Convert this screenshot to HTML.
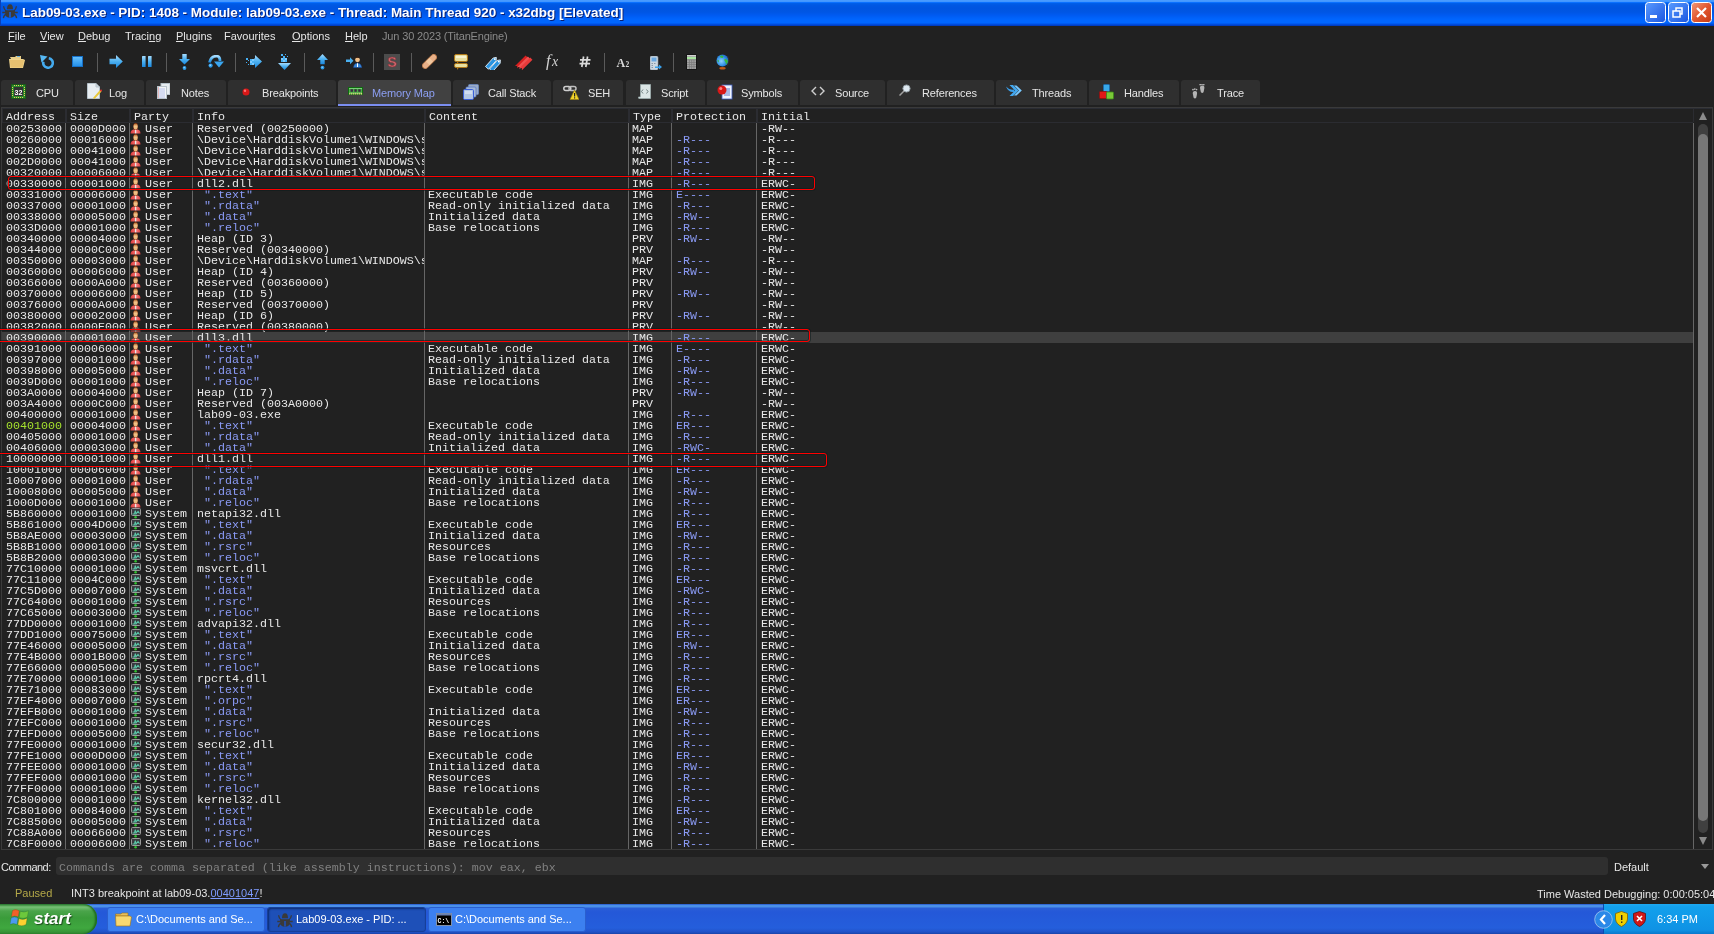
<!DOCTYPE html><html><head><meta charset="utf-8"><style>
*{margin:0;padding:0;box-sizing:border-box}
html,body{width:1714px;height:934px;overflow:hidden;background:#212121}
body{position:relative;font-family:"Liberation Sans",sans-serif;font-size:11px;color:#e6e6e6;will-change:transform}
.a{position:absolute}
.t{position:absolute;white-space:pre;line-height:13px}
.m{font-family:"Liberation Mono",monospace;font-size:11.667px}
#rows{position:absolute;left:0;top:0;will-change:transform;color:#e8e8e8}
#rows .t{line-height:13px;height:13px}
.sep{position:absolute;background:#666;width:1px}
.tsep{position:absolute;width:1px;top:53px;height:19px;background:#5a5a5a}
.tab{position:absolute;top:80px;height:25px;background:#2f2f2f;border-radius:3px 3px 0 0}
.tab.sel{background:#414141;height:26px}
.tab .lb{position:absolute;top:7px;white-space:pre;color:#e6e6e6;letter-spacing:-0.15px}
.tab.sel .lb{color:#8c9ff2}
.blue{color:#8b9bf6}
.green{color:#a6e22e}
u{text-decoration:underline;text-underline-offset:1px;text-decoration-thickness:1px}
</style></head><body>
<div class="a" style="left:0;top:0;width:1714px;height:26px;background:linear-gradient(#4a9cff 0px,#3f94ff 2px,#0a70ff 2px,#0a70ff 3px,#0060ea 3px,#0058e4 5px,#0054e0 8px,#0056e4 12px,#005af0 15px,#0062fa 18px,#0066ff 20px,#0066ff 23px,#0050e2 24px,#0046d4 25px,#0034b0 26px)"></div>
<div class="a" style="left:0;top:0;width:1px;height:26px;background:#0a3fb8"></div>
<svg class="a" style="left:0px;top:2px;" width="20" height="18" viewBox="0 0 20 18"><g fill="#3a3a3a"><path d="M7 7.3Q7 2.2 10 2.2Q13 2.2 13 7.3Z"/><path d="M5 8.3H15L14.6 12.8Q14 15.8 10 15.8Q6 15.8 5.4 12.8Z"/></g><path d="M3.6 4.3Q4 7.8 6.2 9M16.4 4.3Q16 7.8 13.8 9M2.3 10.5H17.7M6 12.3Q3.8 13 3.4 16.2M14 12.3Q16.2 13 16.6 16.2" stroke="#3a3a3a" stroke-width="1.3" fill="none"/><rect x="9.2" y="10" width="1.6" height="5.6" fill="#1a5fd8"/></svg>
<div class="t" style="left:22px;top:5px;font-size:13.45px;font-weight:bold;color:#fff;line-height:16px;text-shadow:1px 1px 0 #0a1f70">Lab09-03.exe - PID: 1408 - Module: lab09-03.exe - Thread: Main Thread 920 - x32dbg [Elevated]</div>
<svg class="a" style="left:1645px;top:2px;" width="21" height="21" viewBox="0 0 21 21"><defs><linearGradient id="tb" x1="0" y1="0" x2="1" y2="1"><stop offset="0" stop-color="#5a9bff"/><stop offset="1" stop-color="#1a55e0"/></linearGradient></defs><rect x="0.5" y="0.5" width="20" height="20" rx="3" fill="url(#tb)" stroke="#fff"/><rect x="5" y="13" width="7" height="3" fill="#fff"/></svg><svg class="a" style="left:1668px;top:2px;" width="21" height="21" viewBox="0 0 21 21"><rect x="0.5" y="0.5" width="20" height="20" rx="3" fill="url(#tb)" stroke="#fff"/><rect x="5" y="9" width="7" height="6" fill="none" stroke="#fff" stroke-width="1.5"/><path d="M8 9V6H14V12H12" fill="none" stroke="#fff" stroke-width="1.5"/></svg><svg class="a" style="left:1691px;top:2px;" width="21" height="21" viewBox="0 0 21 21"><defs><linearGradient id="tc" x1="0" y1="0" x2="1" y2="1"><stop offset="0" stop-color="#f29a7a"/><stop offset="0.5" stop-color="#e2572f"/><stop offset="1" stop-color="#c53a14"/></linearGradient></defs><rect x="0.5" y="0.5" width="20" height="20" rx="3" fill="url(#tc)" stroke="#fff"/><path d="M6 6L15 15M15 6L6 15" stroke="#fff" stroke-width="2.2"/></svg>
<div class="t" style="left:8px;top:30px"><u>F</u>ile</div>
<div class="t" style="left:40px;top:30px"><u>V</u>iew</div>
<div class="t" style="left:78px;top:30px"><u>D</u>ebug</div>
<div class="t" style="left:125px;top:30px">Traci<u>n</u>g</div>
<div class="t" style="left:176px;top:30px"><u>P</u>lugins</div>
<div class="t" style="left:224px;top:30px">Favour<u>i</u>tes</div>
<div class="t" style="left:292px;top:30px"><u>O</u>ptions</div>
<div class="t" style="left:345px;top:30px"><u>H</u>elp</div>
<div class="t" style="left:382px;top:30px;color:#8a8a8a;letter-spacing:-0.15px">Jun 30 2023 (TitanEngine)</div>
<div class="tsep" style="left:97px"></div>
<div class="tsep" style="left:166px"></div>
<div class="tsep" style="left:235px"></div>
<div class="tsep" style="left:304px"></div>
<div class="tsep" style="left:373px"></div>
<div class="tsep" style="left:411px"></div>
<div class="tsep" style="left:604px"></div>
<div class="tsep" style="left:673px"></div>
<svg class="a" style="left:9px;top:55px;" width="16" height="13" viewBox="0 0 16 13"><path d="M1 2H6L7 1H12V4H2Z" fill="#e8cf8a"/><rect x="8" y="1" width="3" height="1" fill="#6ab0e0"/><path d="M0 4H14L16 5L14 13H1Z" fill="#f0d48c"/><path d="M1 5H15L13.5 12.5H1.5Z" fill="#e6c070"/></svg><svg class="a" style="left:40px;top:55px;" width="14" height="14" viewBox="0 0 14 14"><path d="M8.8 3.2A4.8 4.8 0 1 1 3.4 6.6" fill="none" stroke="#44aaee" stroke-width="2.6"/><path d="M0 0L7.5 1.5L1.5 7.5Z" fill="#56b8f4"/></svg><svg class="a" style="left:72px;top:56px;" width="11" height="11" viewBox="0 0 11 11"><defs><linearGradient id="st" x1="0" y1="0" x2="0" y2="1"><stop offset="0" stop-color="#6cc4ff"/><stop offset="1" stop-color="#1e8ce8"/></linearGradient></defs><rect width="11" height="11" fill="url(#st)"/><rect x="0.5" y="0.5" width="10" height="10" fill="none" stroke="#1670c8"/></svg><svg class="a" style="left:109px;top:55px;" width="14" height="13" viewBox="0 0 14 13"><defs><linearGradient id="bg1" x1="0" y1="0" x2="0" y2="1"><stop offset="0" stop-color="#a6dcff"/><stop offset="0.5" stop-color="#4cb0f0"/><stop offset="1" stop-color="#1a88e0"/></linearGradient></defs><path d="M0.5 3.8H7V0L13.8 6.5L7 13V9.2H0.5Z" fill="url(#bg1)" /></svg><svg class="a" style="left:142px;top:56px;" width="10" height="11" viewBox="0 0 10 11"><rect x="0" y="0" width="3.6" height="11" rx="0.5" fill="url(#bg1)"/><rect x="6" y="0" width="3.6" height="11" rx="0.5" fill="url(#bg1)"/></svg><svg class="a" style="left:179px;top:54px;" width="11" height="16" viewBox="0 0 11 16"><path d="M3.3 0H7.7V5H11L5.5 10.5L0 5H3.3Z" fill="url(#bg1)" /><circle cx="5.5" cy="14" r="1.9" fill="#2a9ae8"/><circle cx="5.2" cy="13.6" r="0.8" fill="#8ad0ff"/></svg><svg class="a" style="left:208px;top:55px;" width="16" height="13" viewBox="0 0 16 13"><path d="M1.5 7.5Q3 1 9 1.2Q12 1.5 12 6" fill="none" stroke="url(#bg1)" stroke-width="2.8"/><path d="M6 6.5H16L11 12.5Z" fill="#3aa6f0"/><circle cx="2.6" cy="10.6" r="2.1" fill="#2a9ae8"/><circle cx="2.3" cy="10.2" r="0.9" fill="#8ad0ff"/></svg><svg class="a" style="left:246px;top:55px;" width="16" height="13" viewBox="0 0 16 13"><path d="M9 0L16 6.5L9 13V9.5H8V3.5H9Z" fill="url(#bg1)"/><g fill="#46b0f4"><rect x="0" y="3" width="2" height="2"/><rect x="4" y="4" width="2" height="2"/><rect x="6" y="4" width="2" height="2" fill="#7ccaff"/><rect x="4" y="6" width="2" height="2" fill="#7ccaff"/><rect x="6" y="6" width="2" height="2"/><rect x="4" y="8" width="2" height="2"/><rect x="6" y="8" width="2" height="2" fill="#7ccaff"/><rect x="0" y="7" width="1" height="1"/><rect x="2" y="9" width="1" height="1"/><rect x="2" y="5" width="1" height="1"/></g></svg><svg class="a" style="left:278px;top:54px;" width="13" height="16" viewBox="0 0 13 16"><path d="M0 9H13L6.5 16Z" fill="url(#bg1)"/><g fill="#46b0f4"><rect x="3" y="0" width="2" height="2"/><rect x="7" y="0" width="1" height="1"/><rect x="9" y="2" width="1" height="1"/><rect x="5" y="2" width="2" height="2"/><rect x="3" y="4" width="2" height="2" fill="#7ccaff"/><rect x="5" y="4" width="2" height="2"/><rect x="7" y="4" width="2" height="2" fill="#7ccaff"/><rect x="3" y="6" width="2" height="2"/><rect x="5" y="6" width="2" height="2" fill="#7ccaff"/><rect x="7" y="6" width="2" height="2"/></g></svg><svg class="a" style="left:317px;top:54px;" width="11" height="16" viewBox="0 0 11 16"><path d="M5.5 0L11 6H7.7V10.2H3.3V6H0Z" fill="url(#bg1)" /><circle cx="5.5" cy="13.6" r="1.9" fill="#2a9ae8"/><circle cx="5.2" cy="13.2" r="0.8" fill="#8ad0ff"/></svg><svg class="a" style="left:346px;top:56px;" width="16" height="12" viewBox="0 0 16 12"><path d="M0 3.5H4V1.3L7.5 4.8L4 8.3V6.1H0Z" fill="#4ab0f0"/><circle cx="11.5" cy="3.8" r="2.4" fill="#f0c08a"/><path d="M9 3Q9.5 0.3 11.5 0.5Q13.8 0.3 14 3L13.3 2Q11.5 1.3 9.7 2Z" fill="#3a2010"/><path d="M7.5 11.5Q8 7.2 11.5 7.2Q15 7.2 15.8 11.5Z" fill="#3a88d8" stroke="#1a4aa0" stroke-width="0.5"/><path d="M11 7.2H12V11H11Z" fill="#fff"/></svg><svg class="a" style="left:384px;top:54px;" width="16" height="16" viewBox="0 0 16 16"><rect width="16" height="16" fill="#4c4c4c"/><text x="8.2" y="13.3" text-anchor="middle" font-family="Liberation Sans" font-weight="bold" font-size="14" fill="#d0686e" stroke="#8a3038" stroke-width="0.5">S</text></svg><svg class="a" style="left:422px;top:54px;" width="15" height="15" viewBox="0 0 15 15"><g transform="rotate(-45 7.5 7.5)"><rect x="-1.5" y="4.5" width="18" height="6" rx="3" fill="#e8b088" stroke="#b07040" stroke-width="0.8"/><rect x="5" y="5" width="5" height="5" fill="#f0c8a0"/></g></svg><svg class="a" style="left:454px;top:54px;" width="14" height="16" viewBox="0 0 14 16"><rect x="0.5" y="0.5" width="13" height="7" rx="1.5" fill="#e8e0a0" stroke="#b07818"/><path d="M3 7.5L3 10L5 7.5Z" fill="#b07818"/><rect x="0.5" y="9.5" width="13" height="4" rx="1.5" fill="#e8e0a0" stroke="#b07818"/><path d="M3 13.5L3 16L5 13.5Z" fill="#b07818"/><rect x="2" y="2" width="10" height="2" fill="#f6f2d0"/></svg><svg class="a" style="left:484px;top:54px;" width="18" height="16" viewBox="0 0 18 16"><g transform="translate(1.5,12.5) rotate(-48)"><path d="M0 0H11.5L14 2L11.5 4H0Z" fill="#2a94e0" stroke="#f0f8ff" stroke-width="0.8"/><circle cx="11.7" cy="2" r="0.9" fill="#fff"/></g><g transform="translate(5.5,15) rotate(-48)"><path d="M0 0H11.5L14 2L11.5 4H0Z" fill="#2a94e0" stroke="#f0f8ff" stroke-width="0.8"/><circle cx="11.7" cy="2" r="0.9" fill="#fff"/></g></svg><svg class="a" style="left:514px;top:53px;" width="19" height="17" viewBox="0 0 19 17"><g transform="translate(1,13) rotate(-45)"><path d="M0 0H15V3.2H0L1.6 1.6Z" fill="#d82020"/></g><g transform="translate(3.3,14) rotate(-45)"><path d="M0 0H15V3.2H0L1.6 1.6Z" fill="#f05050"/></g><g transform="translate(5.6,15) rotate(-45)"><path d="M0 0H15V3.2H0L1.6 1.6Z" fill="#e83a3a"/></g></svg><svg class="a" style="left:545px;top:53px;" width="17" height="17" viewBox="0 0 17 17"><text x="1" y="13" font-family="Liberation Serif" font-style="italic" font-size="16.5" fill="#d2d2d2">f</text><text x="7" y="13" font-family="Liberation Serif" font-style="italic" font-size="14" fill="#d2d2d2">x</text></svg><svg class="a" style="left:579px;top:56px;" width="12" height="12" viewBox="0 0 12 12"><path d="M4.6 0.5L2.8 11M8.6 0.5L6.8 11M1 3.8H11.5M0.5 7.6H11" stroke="#dadada" stroke-width="1.7" fill="none"/></svg><svg class="a" style="left:616px;top:56px;" width="16" height="12" viewBox="0 0 16 12"><text x="0.5" y="10.5" font-family="Liberation Serif" font-weight="bold" font-size="12" fill="#d8d8d8">A</text><text x="9.5" y="10.5" font-family="Liberation Serif" font-weight="bold" font-size="7.5" fill="#d8d8d8">2</text></svg><svg class="a" style="left:650px;top:56px;" width="13" height="14" viewBox="0 0 13 14"><rect x="0" y="0" width="8" height="14" rx="1.5" fill="#cdd8e0" stroke="#8898a8" stroke-width="0.6"/><rect x="1.5" y="1.5" width="5" height="4" fill="#6aa8e0"/><g fill="#8898a8"><rect x="1.5" y="7" width="1.5" height="1"/><rect x="4" y="7" width="1.5" height="1"/><rect x="1.5" y="9" width="1.5" height="1"/><rect x="1.5" y="11" width="1.5" height="1"/></g><path d="M5 10.5H9V8.5L12 11L9 13.5V12H5Z" fill="#3aa0ea"/></svg><svg class="a" style="left:686px;top:54px;" width="11" height="16" viewBox="0 0 11 16"><rect x="0" y="0" width="11" height="16" rx="1" fill="#141414"/><rect x="1" y="1" width="9" height="14" fill="#a0a0a0"/><rect x="1" y="1" width="9" height="1.2" fill="#d0d0d0"/><rect x="1" y="3" width="9" height="2.2" fill="#a8e4a0"/><g fill="#7a7a7a"><rect x="3.2" y="6" width="0.7" height="9"/><rect x="5.4" y="6" width="0.7" height="9"/><rect x="7.6" y="6" width="0.7" height="9"/><rect x="1" y="8" width="9" height="0.7"/><rect x="1" y="10.2" width="9" height="0.7"/><rect x="1" y="12.4" width="9" height="0.7"/><rect x="1" y="5.5" width="9" height="0.7"/></g></svg><svg class="a" style="left:716px;top:54px;" width="14" height="16" viewBox="0 0 14 16"><defs><radialGradient id="gl" cx="0.4" cy="0.55" r="0.7"><stop offset="0" stop-color="#8ad0ff"/><stop offset="0.6" stop-color="#2a8ae0"/><stop offset="1" stop-color="#1a50b0"/></radialGradient></defs><circle cx="6.5" cy="6.5" r="6" fill="url(#gl)"/><path d="M4 2Q6 1 7.5 2.5L6.5 4L4.5 3.5Z M8.5 5Q11 4.5 12 7Q11.5 9.5 10 10.5L9.5 8Q8 7.5 8.5 5Z M1.5 6Q2.5 5.5 3 7L2 8.5Z" fill="#38b838"/><path d="M12 2.5Q14 6.5 11.5 11.5" stroke="#333" stroke-width="0.8" fill="none"/><ellipse cx="6.5" cy="14.3" rx="3.2" ry="1.2" fill="#c05a18"/></svg>
<div class="tab" style="left:1px;width:72px">
<div class="lb" style="left:35px">CPU</div>
<svg class="a" style="left:10px;top:4px" width="15" height="15" viewBox="0 0 15 15"><rect width="15" height="15" fill="#2a8a2a"/><rect x="0.5" y="0.5" width="14" height="14" fill="none" stroke="#1a5a1a"/><g fill="#e8d060"><rect x="3" y="1" width="1" height="1"/><rect x="5" y="1" width="1" height="1"/><rect x="7" y="1" width="1" height="1"/><rect x="9" y="1" width="1" height="1"/><rect x="11" y="1" width="1" height="1"/><rect x="3" y="13" width="1" height="1"/><rect x="5" y="13" width="1" height="1"/><rect x="7" y="13" width="1" height="1"/><rect x="9" y="13" width="1" height="1"/><rect x="11" y="13" width="1" height="1"/><rect x="1" y="3" width="1" height="1"/><rect x="1" y="5" width="1" height="1"/><rect x="1" y="7" width="1" height="1"/><rect x="1" y="9" width="1" height="1"/><rect x="1" y="11" width="1" height="1"/><rect x="13" y="3" width="1" height="1"/><rect x="13" y="5" width="1" height="1"/><rect x="13" y="7" width="1" height="1"/><rect x="13" y="9" width="1" height="1"/><rect x="13" y="11" width="1" height="1"/></g><rect x="3" y="3" width="9" height="9" fill="#333"/><text x="7.5" y="10.5" text-anchor="middle" font-family="Liberation Sans" font-weight="bold" font-size="7" fill="#fff">32</text></svg>
</div>
<div class="tab" style="left:75px;width:69px">
<div class="lb" style="left:34px">Log</div>
<svg class="a" style="left:12px;top:3px" width="15" height="16" viewBox="0 0 15 16"><path d="M0.5 0.5H9L12.5 4V15.5H0.5Z" fill="#e8eef2" stroke="#b8c4cc"/><path d="M9 0.5V4H12.5" fill="#c8d4dc" stroke="#b8c4cc"/><path d="M6 15L13 7L14.5 8.5L7.5 16Z" fill="#e8c838"/><circle cx="14" cy="7.5" r="1" fill="#e03030"/></svg>
</div>
<div class="tab" style="left:146px;width:80px">
<div class="lb" style="left:35px">Notes</div>
<svg class="a" style="left:11px;top:3px" width="13" height="16" viewBox="0 0 13 16"><rect x="4" y="0.5" width="9" height="11" fill="#e8eef2" stroke="#b8c4cc"/><rect x="0.5" y="3.5" width="9" height="12" fill="#f4f6f8" stroke="#b8c4cc"/><g stroke="#a8b8e8" stroke-width="0.8"><path d="M2 6H8M2 8H8M2 10H8M2 12H8M2 14H8"/></g><path d="M1.5 4V15" stroke="#e0a0a0" stroke-width="0.7"/></svg>
</div>
<div class="tab" style="left:228px;width:108px">
<div class="lb" style="left:34px">Breakpoints</div>
<svg class="a" style="left:14px;top:8px" width="8" height="8" viewBox="0 0 8 8"><circle cx="4" cy="4" r="3.5" fill="#d81818"/><circle cx="3" cy="2.8" r="1.2" fill="#ff7070"/></svg>
</div>
<div class="tab sel" style="left:338px;width:113px">
<div class="lb" style="left:34px">Memory Map</div>
<svg class="a" style="left:10px;top:7px" width="15" height="8" viewBox="0 0 15 8"><rect x="0" y="0" width="15" height="8" fill="#106a10"/><rect x="1" y="1" width="13" height="6" fill="#48b048"/><rect x="1" y="1" width="13" height="1" fill="#78d078"/><g fill="#3a2c3e"><rect x="2.5" y="2.2" width="2.5" height="2.6"/><rect x="6.3" y="2.2" width="2.5" height="2.6"/><rect x="10.2" y="2.2" width="2.5" height="2.6"/></g><g fill="#e8d088"><rect x="1.2" y="5.8" width="1.1" height="1.8"/><rect x="3.2" y="5.8" width="1.1" height="1.8"/><rect x="5.2" y="5.8" width="1.1" height="1.8"/><rect x="7.2" y="5.8" width="1.1" height="1.8"/><rect x="9.2" y="5.8" width="1.1" height="1.8"/><rect x="11.2" y="5.8" width="1.1" height="1.8"/><rect x="13.0" y="5.8" width="1.1" height="1.8"/></g></svg>
<div class="a" style="left:0;bottom:0;width:100%;height:2px;background:#7b8ef0"></div>
</div>
<div class="tab" style="left:453px;width:98px">
<div class="lb" style="left:35px">Call Stack</div>
<svg class="a" style="left:10px;top:4px" width="16" height="16" viewBox="0 0 16 16"><rect x="5.5" y="0.5" width="10" height="10" rx="1" fill="#9aacc8" stroke="#6a88c0" stroke-width="0.8"/><rect x="3" y="3" width="10" height="10" rx="1" fill="#a8bcd8" stroke="#5a7ac8" stroke-width="0.8"/><rect x="0.5" y="5.5" width="10" height="10" rx="1.2" fill="#b4c8e4" stroke="#3a60d8" stroke-width="1"/><rect x="2" y="7" width="7" height="3" fill="#d0ddf0"/></svg>
</div>
<div class="tab" style="left:553px;width:70px">
<div class="lb" style="left:35px">SEH</div>
<svg class="a" style="left:10px;top:5px" width="16" height="15" viewBox="0 0 16 15"><rect x="0.8" y="1.5" width="7" height="4" rx="2" fill="none" stroke="#d0d0d0" stroke-width="1.5"/><rect x="6" y="1.5" width="7" height="4" rx="2" fill="none" stroke="#c0c0c0" stroke-width="1.5"/><path d="M11.5 5L16 14.5H7Z" fill="#f2d42a" stroke="#a08010" stroke-width="0.6"/><rect x="11" y="8" width="1.2" height="3.5" fill="#222"/><rect x="11" y="12.3" width="1.2" height="1.2" fill="#222"/></svg>
</div>
<div class="tab" style="left:626px;width:79px">
<div class="lb" style="left:35px">Script</div>
<svg class="a" style="left:12px;top:4px" width="13" height="15" viewBox="0 0 13 15"><path d="M2.5 0.5H12.5V14.5H1Q0.5 14.5 0.5 13.5V13H2.5Z" fill="#dce6e6" stroke="#a0b0b0" stroke-width="0.8"/><path d="M5 5.5L3.5 7.5L5 9.5M8.5 5.5L10 7.5L8.5 9.5" fill="none" stroke="#708080" stroke-width="1"/></svg>
</div>
<div class="tab" style="left:707px;width:91px">
<div class="lb" style="left:34px">Symbols</div>
<svg class="a" style="left:10px;top:4px" width="16" height="16" viewBox="0 0 16 16"><rect x="5" y="1" width="10" height="14" fill="#f0f4ff" stroke="#4060c0" stroke-width="0.8"/><g stroke="#4060c0" stroke-width="0.8"><path d="M7 5H13M7 7H13M7 9H13M7 11H13"/></g><circle cx="5" cy="6" r="4.5" fill="#d81818"/><circle cx="3.8" cy="4.6" r="1.5" fill="#ff8080"/></svg>
</div>
<div class="tab" style="left:800px;width:85px">
<div class="lb" style="left:35px">Source</div>
<svg class="a" style="left:11px;top:6px" width="14" height="10" viewBox="0 0 14 10"><path d="M5 1L1 5L5 9M9 1L13 5L9 9" fill="none" stroke="#cfcfcf" stroke-width="1.4"/></svg>
</div>
<div class="tab" style="left:887px;width:107px">
<div class="lb" style="left:35px">References</div>
<svg class="a" style="left:12px;top:4px" width="12" height="12" viewBox="0 0 12 12"><circle cx="7.5" cy="4.5" r="3.6" fill="#dde8f0" stroke="#909aa0"/><path d="M5 7L0.5 11.5" stroke="#a0a0a0" stroke-width="1.5"/></svg>
</div>
<div class="tab" style="left:996px;width:91px">
<div class="lb" style="left:36px">Threads</div>
<svg class="a" style="left:10px;top:5px" width="16" height="11" viewBox="0 0 16 11"><path d="M0 1.5Q2.5 8 8.5 6.8L8 4.6Q3.5 5.5 0 1.5Z" fill="#3a9ee8"/><path d="M3.5 0L9 5.5L3.5 11H7L12.5 5.5L7 0Z" fill="#42a8f0"/><path d="M8 0.5L13 5.5L8 10.5H10.5L15.8 5.5L10.5 0.5Z" fill="#78c8ff"/></svg>
</div>
<div class="tab" style="left:1089px;width:90px">
<div class="lb" style="left:35px">Handles</div>
<svg class="a" style="left:10px;top:4px" width="15" height="16" viewBox="0 0 15 16"><rect x="4.5" y="0.5" width="6" height="7" rx="0.8" fill="#38a8e8" stroke="#1a6ab0" stroke-width="0.8"/><rect x="0.5" y="7.5" width="7.5" height="7" rx="0.8" fill="#e01818" stroke="#901010" stroke-width="0.8"/><rect x="7.5" y="8" width="7" height="7" rx="0.8" fill="#7ac838" stroke="#3a8818" stroke-width="0.8"/></svg>
</div>
<div class="tab" style="left:1181px;width:79px">
<div class="lb" style="left:36px">Trace</div>
<svg class="a" style="left:11px;top:4px" width="14" height="16" viewBox="0 0 14 16"><g fill="#b4b4b4"><path d="M0.8 9.5Q0.5 7 3 7Q5.5 7 5 10L4.3 13.5Q3 15.5 1.5 13.5Z"/><path d="M8 4Q7.8 1.5 10.3 1.5Q12.8 1.5 12.3 4.5L11.6 8Q10.3 10 8.8 8Z"/><circle cx="1" cy="5.6" r="0.9"/><circle cx="2.8" cy="5.1" r="0.9"/><circle cx="4.6" cy="5.6" r="0.8"/><circle cx="8.2" cy="0.6" r="0.9"/><circle cx="10" cy="0.3" r="0.9"/><circle cx="11.8" cy="0.7" r="0.8"/></g></svg>
</div>
<div class="a" style="left:1px;top:107px;width:1712px;height:743px;border:1px solid #3a3a3a;border-right-color:#3a3a3a"></div>
<div class="a" style="left:2px;top:122px;width:1691px;height:1px;background:#2b2c31"></div>
<div class="a" style="left:2px;top:108px;width:1710px;height:1px;background:#2a2c33"></div>
<div class="a" style="left:65px;top:108px;width:2px;height:14px;background:#2b2c31"></div>
<div class="a" style="left:129px;top:108px;width:2px;height:14px;background:#2b2c31"></div>
<div class="a" style="left:192px;top:108px;width:2px;height:14px;background:#2b2c31"></div>
<div class="a" style="left:424px;top:108px;width:2px;height:14px;background:#2b2c31"></div>
<div class="a" style="left:628px;top:108px;width:2px;height:14px;background:#2b2c31"></div>
<div class="a" style="left:671px;top:108px;width:2px;height:14px;background:#2b2c31"></div>
<div class="a" style="left:756px;top:108px;width:2px;height:14px;background:#2b2c31"></div>
<div class="a" style="left:2px;top:108px;width:1px;height:14px;background:#2b2c31"></div>
<div class="a" style="left:1693px;top:108px;width:1px;height:14px;background:#2b2c31"></div>
<div style="position:absolute;left:0;top:0;will-change:transform;color:#e8e8e8">
<div class="t m" style="left:6px;top:111px;line-height:13px">Address</div>
<div class="t m" style="left:70px;top:111px;line-height:13px">Size</div>
<div class="t m" style="left:134px;top:111px;line-height:13px">Party</div>
<div class="t m" style="left:197px;top:111px;line-height:13px">Info</div>
<div class="t m" style="left:429px;top:111px;line-height:13px">Content</div>
<div class="t m" style="left:633px;top:111px;line-height:13px">Type</div>
<div class="t m" style="left:676px;top:111px;line-height:13px">Protection</div>
<div class="t m" style="left:761px;top:111px;line-height:13px">Initial</div>
</div>
<div class="a" style="left:2px;top:332px;width:1691px;height:11px;background:#3f3f3f"></div>
<div class="sep" style="left:65px;top:123px;height:726px"></div>
<div class="sep" style="left:129px;top:123px;height:726px"></div>
<div class="sep" style="left:192px;top:123px;height:726px"></div>
<div class="sep" style="left:424px;top:123px;height:726px"></div>
<div class="sep" style="left:628px;top:123px;height:726px"></div>
<div class="sep" style="left:671px;top:123px;height:726px"></div>
<div class="sep" style="left:756px;top:123px;height:726px"></div>
<div class="sep" style="left:1693px;top:123px;height:726px"></div>
<div id="rows">
<div class="t m" style="left:6px;top:123px">00253000</div>
<div class="t m" style="left:70px;top:123px">0000D000</div>
<svg class="a" style="left:130px;top:123px" width="11" height="11" viewBox="0 0 11 11"><defs><linearGradient id="ub" x1="0" y1="0" x2="1" y2="0"><stop offset="0" stop-color="#d83838"/><stop offset="0.6" stop-color="#f87a7a"/><stop offset="1" stop-color="#d84040"/></linearGradient><linearGradient id="uh" x1="0" y1="0" x2="0" y2="1"><stop offset="0" stop-color="#a8581c"/><stop offset="0.45" stop-color="#f2c48a"/><stop offset="1" stop-color="#e8b070"/></linearGradient></defs><path d="M3.3 2.2Q3.5 0 5.6 0Q7.7 0 7.8 2.2L7.6 6.5Q5.6 7.5 3.5 6.5Z" fill="#7a2a10"/><ellipse cx="5.6" cy="3.4" rx="2.1" ry="3" fill="url(#uh)"/><path d="M0.5 10.5Q0.6 7.2 3.5 6.5L5.6 7L7.6 6.5Q10.5 7.2 10.5 10.5Z" fill="url(#ub)"/><rect x="5" y="6.8" width="1.2" height="3.5" fill="#e8e8e8"/></svg>
<div class="t m" style="left:145px;top:123px">User</div>
<div class="t m" style="left:197px;top:123px;width:227px;overflow:hidden">Reserved (00250000)</div>
<div class="t m" style="left:632px;top:123px">MAP</div>
<div class="t m" style="left:761px;top:123px">-RW--</div>
<div class="t m" style="left:6px;top:134px">00260000</div>
<div class="t m" style="left:70px;top:134px">00016000</div>
<svg class="a" style="left:130px;top:134px" width="11" height="11" viewBox="0 0 11 11"><defs><linearGradient id="ub" x1="0" y1="0" x2="1" y2="0"><stop offset="0" stop-color="#d83838"/><stop offset="0.6" stop-color="#f87a7a"/><stop offset="1" stop-color="#d84040"/></linearGradient><linearGradient id="uh" x1="0" y1="0" x2="0" y2="1"><stop offset="0" stop-color="#a8581c"/><stop offset="0.45" stop-color="#f2c48a"/><stop offset="1" stop-color="#e8b070"/></linearGradient></defs><path d="M3.3 2.2Q3.5 0 5.6 0Q7.7 0 7.8 2.2L7.6 6.5Q5.6 7.5 3.5 6.5Z" fill="#7a2a10"/><ellipse cx="5.6" cy="3.4" rx="2.1" ry="3" fill="url(#uh)"/><path d="M0.5 10.5Q0.6 7.2 3.5 6.5L5.6 7L7.6 6.5Q10.5 7.2 10.5 10.5Z" fill="url(#ub)"/><rect x="5" y="6.8" width="1.2" height="3.5" fill="#e8e8e8"/></svg>
<div class="t m" style="left:145px;top:134px">User</div>
<div class="t m" style="left:197px;top:134px;width:227px;overflow:hidden">\Device\HarddiskVolume1\WINDOWS\system32</div>
<div class="t m" style="left:632px;top:134px">MAP</div>
<div class="t m blue" style="left:676px;top:134px">-R---</div>
<div class="t m" style="left:761px;top:134px">-R---</div>
<div class="t m" style="left:6px;top:145px">00280000</div>
<div class="t m" style="left:70px;top:145px">00041000</div>
<svg class="a" style="left:130px;top:145px" width="11" height="11" viewBox="0 0 11 11"><defs><linearGradient id="ub" x1="0" y1="0" x2="1" y2="0"><stop offset="0" stop-color="#d83838"/><stop offset="0.6" stop-color="#f87a7a"/><stop offset="1" stop-color="#d84040"/></linearGradient><linearGradient id="uh" x1="0" y1="0" x2="0" y2="1"><stop offset="0" stop-color="#a8581c"/><stop offset="0.45" stop-color="#f2c48a"/><stop offset="1" stop-color="#e8b070"/></linearGradient></defs><path d="M3.3 2.2Q3.5 0 5.6 0Q7.7 0 7.8 2.2L7.6 6.5Q5.6 7.5 3.5 6.5Z" fill="#7a2a10"/><ellipse cx="5.6" cy="3.4" rx="2.1" ry="3" fill="url(#uh)"/><path d="M0.5 10.5Q0.6 7.2 3.5 6.5L5.6 7L7.6 6.5Q10.5 7.2 10.5 10.5Z" fill="url(#ub)"/><rect x="5" y="6.8" width="1.2" height="3.5" fill="#e8e8e8"/></svg>
<div class="t m" style="left:145px;top:145px">User</div>
<div class="t m" style="left:197px;top:145px;width:227px;overflow:hidden">\Device\HarddiskVolume1\WINDOWS\system32</div>
<div class="t m" style="left:632px;top:145px">MAP</div>
<div class="t m blue" style="left:676px;top:145px">-R---</div>
<div class="t m" style="left:761px;top:145px">-R---</div>
<div class="t m" style="left:6px;top:156px">002D0000</div>
<div class="t m" style="left:70px;top:156px">00041000</div>
<svg class="a" style="left:130px;top:156px" width="11" height="11" viewBox="0 0 11 11"><defs><linearGradient id="ub" x1="0" y1="0" x2="1" y2="0"><stop offset="0" stop-color="#d83838"/><stop offset="0.6" stop-color="#f87a7a"/><stop offset="1" stop-color="#d84040"/></linearGradient><linearGradient id="uh" x1="0" y1="0" x2="0" y2="1"><stop offset="0" stop-color="#a8581c"/><stop offset="0.45" stop-color="#f2c48a"/><stop offset="1" stop-color="#e8b070"/></linearGradient></defs><path d="M3.3 2.2Q3.5 0 5.6 0Q7.7 0 7.8 2.2L7.6 6.5Q5.6 7.5 3.5 6.5Z" fill="#7a2a10"/><ellipse cx="5.6" cy="3.4" rx="2.1" ry="3" fill="url(#uh)"/><path d="M0.5 10.5Q0.6 7.2 3.5 6.5L5.6 7L7.6 6.5Q10.5 7.2 10.5 10.5Z" fill="url(#ub)"/><rect x="5" y="6.8" width="1.2" height="3.5" fill="#e8e8e8"/></svg>
<div class="t m" style="left:145px;top:156px">User</div>
<div class="t m" style="left:197px;top:156px;width:227px;overflow:hidden">\Device\HarddiskVolume1\WINDOWS\system32</div>
<div class="t m" style="left:632px;top:156px">MAP</div>
<div class="t m blue" style="left:676px;top:156px">-R---</div>
<div class="t m" style="left:761px;top:156px">-R---</div>
<div class="t m" style="left:6px;top:167px">00320000</div>
<div class="t m" style="left:70px;top:167px">00006000</div>
<svg class="a" style="left:130px;top:167px" width="11" height="11" viewBox="0 0 11 11"><defs><linearGradient id="ub" x1="0" y1="0" x2="1" y2="0"><stop offset="0" stop-color="#d83838"/><stop offset="0.6" stop-color="#f87a7a"/><stop offset="1" stop-color="#d84040"/></linearGradient><linearGradient id="uh" x1="0" y1="0" x2="0" y2="1"><stop offset="0" stop-color="#a8581c"/><stop offset="0.45" stop-color="#f2c48a"/><stop offset="1" stop-color="#e8b070"/></linearGradient></defs><path d="M3.3 2.2Q3.5 0 5.6 0Q7.7 0 7.8 2.2L7.6 6.5Q5.6 7.5 3.5 6.5Z" fill="#7a2a10"/><ellipse cx="5.6" cy="3.4" rx="2.1" ry="3" fill="url(#uh)"/><path d="M0.5 10.5Q0.6 7.2 3.5 6.5L5.6 7L7.6 6.5Q10.5 7.2 10.5 10.5Z" fill="url(#ub)"/><rect x="5" y="6.8" width="1.2" height="3.5" fill="#e8e8e8"/></svg>
<div class="t m" style="left:145px;top:167px">User</div>
<div class="t m" style="left:197px;top:167px;width:227px;overflow:hidden">\Device\HarddiskVolume1\WINDOWS\system32</div>
<div class="t m" style="left:632px;top:167px">MAP</div>
<div class="t m blue" style="left:676px;top:167px">-R---</div>
<div class="t m" style="left:761px;top:167px">-R---</div>
<div class="t m" style="left:6px;top:178px">00330000</div>
<div class="t m" style="left:70px;top:178px">00001000</div>
<svg class="a" style="left:130px;top:178px" width="11" height="11" viewBox="0 0 11 11"><defs><linearGradient id="ub" x1="0" y1="0" x2="1" y2="0"><stop offset="0" stop-color="#d83838"/><stop offset="0.6" stop-color="#f87a7a"/><stop offset="1" stop-color="#d84040"/></linearGradient><linearGradient id="uh" x1="0" y1="0" x2="0" y2="1"><stop offset="0" stop-color="#a8581c"/><stop offset="0.45" stop-color="#f2c48a"/><stop offset="1" stop-color="#e8b070"/></linearGradient></defs><path d="M3.3 2.2Q3.5 0 5.6 0Q7.7 0 7.8 2.2L7.6 6.5Q5.6 7.5 3.5 6.5Z" fill="#7a2a10"/><ellipse cx="5.6" cy="3.4" rx="2.1" ry="3" fill="url(#uh)"/><path d="M0.5 10.5Q0.6 7.2 3.5 6.5L5.6 7L7.6 6.5Q10.5 7.2 10.5 10.5Z" fill="url(#ub)"/><rect x="5" y="6.8" width="1.2" height="3.5" fill="#e8e8e8"/></svg>
<div class="t m" style="left:145px;top:178px">User</div>
<div class="t m" style="left:197px;top:178px;width:227px;overflow:hidden">dll2.dll</div>
<div class="t m" style="left:632px;top:178px">IMG</div>
<div class="t m blue" style="left:676px;top:178px">-R---</div>
<div class="t m" style="left:761px;top:178px">ERWC-</div>
<div class="t m" style="left:6px;top:189px">00331000</div>
<div class="t m" style="left:70px;top:189px">00006000</div>
<svg class="a" style="left:130px;top:189px" width="11" height="11" viewBox="0 0 11 11"><defs><linearGradient id="ub" x1="0" y1="0" x2="1" y2="0"><stop offset="0" stop-color="#d83838"/><stop offset="0.6" stop-color="#f87a7a"/><stop offset="1" stop-color="#d84040"/></linearGradient><linearGradient id="uh" x1="0" y1="0" x2="0" y2="1"><stop offset="0" stop-color="#a8581c"/><stop offset="0.45" stop-color="#f2c48a"/><stop offset="1" stop-color="#e8b070"/></linearGradient></defs><path d="M3.3 2.2Q3.5 0 5.6 0Q7.7 0 7.8 2.2L7.6 6.5Q5.6 7.5 3.5 6.5Z" fill="#7a2a10"/><ellipse cx="5.6" cy="3.4" rx="2.1" ry="3" fill="url(#uh)"/><path d="M0.5 10.5Q0.6 7.2 3.5 6.5L5.6 7L7.6 6.5Q10.5 7.2 10.5 10.5Z" fill="url(#ub)"/><rect x="5" y="6.8" width="1.2" height="3.5" fill="#e8e8e8"/></svg>
<div class="t m" style="left:145px;top:189px">User</div>
<div class="t m blue" style="left:197px;top:189px"> &quot;.text&quot;</div>
<div class="t m" style="left:428px;top:189px">Executable code</div>
<div class="t m" style="left:632px;top:189px">IMG</div>
<div class="t m blue" style="left:676px;top:189px">E----</div>
<div class="t m" style="left:761px;top:189px">ERWC-</div>
<div class="t m" style="left:6px;top:200px">00337000</div>
<div class="t m" style="left:70px;top:200px">00001000</div>
<svg class="a" style="left:130px;top:200px" width="11" height="11" viewBox="0 0 11 11"><defs><linearGradient id="ub" x1="0" y1="0" x2="1" y2="0"><stop offset="0" stop-color="#d83838"/><stop offset="0.6" stop-color="#f87a7a"/><stop offset="1" stop-color="#d84040"/></linearGradient><linearGradient id="uh" x1="0" y1="0" x2="0" y2="1"><stop offset="0" stop-color="#a8581c"/><stop offset="0.45" stop-color="#f2c48a"/><stop offset="1" stop-color="#e8b070"/></linearGradient></defs><path d="M3.3 2.2Q3.5 0 5.6 0Q7.7 0 7.8 2.2L7.6 6.5Q5.6 7.5 3.5 6.5Z" fill="#7a2a10"/><ellipse cx="5.6" cy="3.4" rx="2.1" ry="3" fill="url(#uh)"/><path d="M0.5 10.5Q0.6 7.2 3.5 6.5L5.6 7L7.6 6.5Q10.5 7.2 10.5 10.5Z" fill="url(#ub)"/><rect x="5" y="6.8" width="1.2" height="3.5" fill="#e8e8e8"/></svg>
<div class="t m" style="left:145px;top:200px">User</div>
<div class="t m blue" style="left:197px;top:200px"> &quot;.rdata&quot;</div>
<div class="t m" style="left:428px;top:200px">Read-only initialized data</div>
<div class="t m" style="left:632px;top:200px">IMG</div>
<div class="t m blue" style="left:676px;top:200px">-R---</div>
<div class="t m" style="left:761px;top:200px">ERWC-</div>
<div class="t m" style="left:6px;top:211px">00338000</div>
<div class="t m" style="left:70px;top:211px">00005000</div>
<svg class="a" style="left:130px;top:211px" width="11" height="11" viewBox="0 0 11 11"><defs><linearGradient id="ub" x1="0" y1="0" x2="1" y2="0"><stop offset="0" stop-color="#d83838"/><stop offset="0.6" stop-color="#f87a7a"/><stop offset="1" stop-color="#d84040"/></linearGradient><linearGradient id="uh" x1="0" y1="0" x2="0" y2="1"><stop offset="0" stop-color="#a8581c"/><stop offset="0.45" stop-color="#f2c48a"/><stop offset="1" stop-color="#e8b070"/></linearGradient></defs><path d="M3.3 2.2Q3.5 0 5.6 0Q7.7 0 7.8 2.2L7.6 6.5Q5.6 7.5 3.5 6.5Z" fill="#7a2a10"/><ellipse cx="5.6" cy="3.4" rx="2.1" ry="3" fill="url(#uh)"/><path d="M0.5 10.5Q0.6 7.2 3.5 6.5L5.6 7L7.6 6.5Q10.5 7.2 10.5 10.5Z" fill="url(#ub)"/><rect x="5" y="6.8" width="1.2" height="3.5" fill="#e8e8e8"/></svg>
<div class="t m" style="left:145px;top:211px">User</div>
<div class="t m blue" style="left:197px;top:211px"> &quot;.data&quot;</div>
<div class="t m" style="left:428px;top:211px">Initialized data</div>
<div class="t m" style="left:632px;top:211px">IMG</div>
<div class="t m blue" style="left:676px;top:211px">-RW--</div>
<div class="t m" style="left:761px;top:211px">ERWC-</div>
<div class="t m" style="left:6px;top:222px">0033D000</div>
<div class="t m" style="left:70px;top:222px">00001000</div>
<svg class="a" style="left:130px;top:222px" width="11" height="11" viewBox="0 0 11 11"><defs><linearGradient id="ub" x1="0" y1="0" x2="1" y2="0"><stop offset="0" stop-color="#d83838"/><stop offset="0.6" stop-color="#f87a7a"/><stop offset="1" stop-color="#d84040"/></linearGradient><linearGradient id="uh" x1="0" y1="0" x2="0" y2="1"><stop offset="0" stop-color="#a8581c"/><stop offset="0.45" stop-color="#f2c48a"/><stop offset="1" stop-color="#e8b070"/></linearGradient></defs><path d="M3.3 2.2Q3.5 0 5.6 0Q7.7 0 7.8 2.2L7.6 6.5Q5.6 7.5 3.5 6.5Z" fill="#7a2a10"/><ellipse cx="5.6" cy="3.4" rx="2.1" ry="3" fill="url(#uh)"/><path d="M0.5 10.5Q0.6 7.2 3.5 6.5L5.6 7L7.6 6.5Q10.5 7.2 10.5 10.5Z" fill="url(#ub)"/><rect x="5" y="6.8" width="1.2" height="3.5" fill="#e8e8e8"/></svg>
<div class="t m" style="left:145px;top:222px">User</div>
<div class="t m blue" style="left:197px;top:222px"> &quot;.reloc&quot;</div>
<div class="t m" style="left:428px;top:222px">Base relocations</div>
<div class="t m" style="left:632px;top:222px">IMG</div>
<div class="t m blue" style="left:676px;top:222px">-R---</div>
<div class="t m" style="left:761px;top:222px">ERWC-</div>
<div class="t m" style="left:6px;top:233px">00340000</div>
<div class="t m" style="left:70px;top:233px">00004000</div>
<svg class="a" style="left:130px;top:233px" width="11" height="11" viewBox="0 0 11 11"><defs><linearGradient id="ub" x1="0" y1="0" x2="1" y2="0"><stop offset="0" stop-color="#d83838"/><stop offset="0.6" stop-color="#f87a7a"/><stop offset="1" stop-color="#d84040"/></linearGradient><linearGradient id="uh" x1="0" y1="0" x2="0" y2="1"><stop offset="0" stop-color="#a8581c"/><stop offset="0.45" stop-color="#f2c48a"/><stop offset="1" stop-color="#e8b070"/></linearGradient></defs><path d="M3.3 2.2Q3.5 0 5.6 0Q7.7 0 7.8 2.2L7.6 6.5Q5.6 7.5 3.5 6.5Z" fill="#7a2a10"/><ellipse cx="5.6" cy="3.4" rx="2.1" ry="3" fill="url(#uh)"/><path d="M0.5 10.5Q0.6 7.2 3.5 6.5L5.6 7L7.6 6.5Q10.5 7.2 10.5 10.5Z" fill="url(#ub)"/><rect x="5" y="6.8" width="1.2" height="3.5" fill="#e8e8e8"/></svg>
<div class="t m" style="left:145px;top:233px">User</div>
<div class="t m" style="left:197px;top:233px;width:227px;overflow:hidden">Heap (ID 3)</div>
<div class="t m" style="left:632px;top:233px">PRV</div>
<div class="t m blue" style="left:676px;top:233px">-RW--</div>
<div class="t m" style="left:761px;top:233px">-RW--</div>
<div class="t m" style="left:6px;top:244px">00344000</div>
<div class="t m" style="left:70px;top:244px">0000C000</div>
<svg class="a" style="left:130px;top:244px" width="11" height="11" viewBox="0 0 11 11"><defs><linearGradient id="ub" x1="0" y1="0" x2="1" y2="0"><stop offset="0" stop-color="#d83838"/><stop offset="0.6" stop-color="#f87a7a"/><stop offset="1" stop-color="#d84040"/></linearGradient><linearGradient id="uh" x1="0" y1="0" x2="0" y2="1"><stop offset="0" stop-color="#a8581c"/><stop offset="0.45" stop-color="#f2c48a"/><stop offset="1" stop-color="#e8b070"/></linearGradient></defs><path d="M3.3 2.2Q3.5 0 5.6 0Q7.7 0 7.8 2.2L7.6 6.5Q5.6 7.5 3.5 6.5Z" fill="#7a2a10"/><ellipse cx="5.6" cy="3.4" rx="2.1" ry="3" fill="url(#uh)"/><path d="M0.5 10.5Q0.6 7.2 3.5 6.5L5.6 7L7.6 6.5Q10.5 7.2 10.5 10.5Z" fill="url(#ub)"/><rect x="5" y="6.8" width="1.2" height="3.5" fill="#e8e8e8"/></svg>
<div class="t m" style="left:145px;top:244px">User</div>
<div class="t m" style="left:197px;top:244px;width:227px;overflow:hidden">Reserved (00340000)</div>
<div class="t m" style="left:632px;top:244px">PRV</div>
<div class="t m" style="left:761px;top:244px">-RW--</div>
<div class="t m" style="left:6px;top:255px">00350000</div>
<div class="t m" style="left:70px;top:255px">00003000</div>
<svg class="a" style="left:130px;top:255px" width="11" height="11" viewBox="0 0 11 11"><defs><linearGradient id="ub" x1="0" y1="0" x2="1" y2="0"><stop offset="0" stop-color="#d83838"/><stop offset="0.6" stop-color="#f87a7a"/><stop offset="1" stop-color="#d84040"/></linearGradient><linearGradient id="uh" x1="0" y1="0" x2="0" y2="1"><stop offset="0" stop-color="#a8581c"/><stop offset="0.45" stop-color="#f2c48a"/><stop offset="1" stop-color="#e8b070"/></linearGradient></defs><path d="M3.3 2.2Q3.5 0 5.6 0Q7.7 0 7.8 2.2L7.6 6.5Q5.6 7.5 3.5 6.5Z" fill="#7a2a10"/><ellipse cx="5.6" cy="3.4" rx="2.1" ry="3" fill="url(#uh)"/><path d="M0.5 10.5Q0.6 7.2 3.5 6.5L5.6 7L7.6 6.5Q10.5 7.2 10.5 10.5Z" fill="url(#ub)"/><rect x="5" y="6.8" width="1.2" height="3.5" fill="#e8e8e8"/></svg>
<div class="t m" style="left:145px;top:255px">User</div>
<div class="t m" style="left:197px;top:255px;width:227px;overflow:hidden">\Device\HarddiskVolume1\WINDOWS\system32</div>
<div class="t m" style="left:632px;top:255px">MAP</div>
<div class="t m blue" style="left:676px;top:255px">-R---</div>
<div class="t m" style="left:761px;top:255px">-R---</div>
<div class="t m" style="left:6px;top:266px">00360000</div>
<div class="t m" style="left:70px;top:266px">00006000</div>
<svg class="a" style="left:130px;top:266px" width="11" height="11" viewBox="0 0 11 11"><defs><linearGradient id="ub" x1="0" y1="0" x2="1" y2="0"><stop offset="0" stop-color="#d83838"/><stop offset="0.6" stop-color="#f87a7a"/><stop offset="1" stop-color="#d84040"/></linearGradient><linearGradient id="uh" x1="0" y1="0" x2="0" y2="1"><stop offset="0" stop-color="#a8581c"/><stop offset="0.45" stop-color="#f2c48a"/><stop offset="1" stop-color="#e8b070"/></linearGradient></defs><path d="M3.3 2.2Q3.5 0 5.6 0Q7.7 0 7.8 2.2L7.6 6.5Q5.6 7.5 3.5 6.5Z" fill="#7a2a10"/><ellipse cx="5.6" cy="3.4" rx="2.1" ry="3" fill="url(#uh)"/><path d="M0.5 10.5Q0.6 7.2 3.5 6.5L5.6 7L7.6 6.5Q10.5 7.2 10.5 10.5Z" fill="url(#ub)"/><rect x="5" y="6.8" width="1.2" height="3.5" fill="#e8e8e8"/></svg>
<div class="t m" style="left:145px;top:266px">User</div>
<div class="t m" style="left:197px;top:266px;width:227px;overflow:hidden">Heap (ID 4)</div>
<div class="t m" style="left:632px;top:266px">PRV</div>
<div class="t m blue" style="left:676px;top:266px">-RW--</div>
<div class="t m" style="left:761px;top:266px">-RW--</div>
<div class="t m" style="left:6px;top:277px">00366000</div>
<div class="t m" style="left:70px;top:277px">0000A000</div>
<svg class="a" style="left:130px;top:277px" width="11" height="11" viewBox="0 0 11 11"><defs><linearGradient id="ub" x1="0" y1="0" x2="1" y2="0"><stop offset="0" stop-color="#d83838"/><stop offset="0.6" stop-color="#f87a7a"/><stop offset="1" stop-color="#d84040"/></linearGradient><linearGradient id="uh" x1="0" y1="0" x2="0" y2="1"><stop offset="0" stop-color="#a8581c"/><stop offset="0.45" stop-color="#f2c48a"/><stop offset="1" stop-color="#e8b070"/></linearGradient></defs><path d="M3.3 2.2Q3.5 0 5.6 0Q7.7 0 7.8 2.2L7.6 6.5Q5.6 7.5 3.5 6.5Z" fill="#7a2a10"/><ellipse cx="5.6" cy="3.4" rx="2.1" ry="3" fill="url(#uh)"/><path d="M0.5 10.5Q0.6 7.2 3.5 6.5L5.6 7L7.6 6.5Q10.5 7.2 10.5 10.5Z" fill="url(#ub)"/><rect x="5" y="6.8" width="1.2" height="3.5" fill="#e8e8e8"/></svg>
<div class="t m" style="left:145px;top:277px">User</div>
<div class="t m" style="left:197px;top:277px;width:227px;overflow:hidden">Reserved (00360000)</div>
<div class="t m" style="left:632px;top:277px">PRV</div>
<div class="t m" style="left:761px;top:277px">-RW--</div>
<div class="t m" style="left:6px;top:288px">00370000</div>
<div class="t m" style="left:70px;top:288px">00006000</div>
<svg class="a" style="left:130px;top:288px" width="11" height="11" viewBox="0 0 11 11"><defs><linearGradient id="ub" x1="0" y1="0" x2="1" y2="0"><stop offset="0" stop-color="#d83838"/><stop offset="0.6" stop-color="#f87a7a"/><stop offset="1" stop-color="#d84040"/></linearGradient><linearGradient id="uh" x1="0" y1="0" x2="0" y2="1"><stop offset="0" stop-color="#a8581c"/><stop offset="0.45" stop-color="#f2c48a"/><stop offset="1" stop-color="#e8b070"/></linearGradient></defs><path d="M3.3 2.2Q3.5 0 5.6 0Q7.7 0 7.8 2.2L7.6 6.5Q5.6 7.5 3.5 6.5Z" fill="#7a2a10"/><ellipse cx="5.6" cy="3.4" rx="2.1" ry="3" fill="url(#uh)"/><path d="M0.5 10.5Q0.6 7.2 3.5 6.5L5.6 7L7.6 6.5Q10.5 7.2 10.5 10.5Z" fill="url(#ub)"/><rect x="5" y="6.8" width="1.2" height="3.5" fill="#e8e8e8"/></svg>
<div class="t m" style="left:145px;top:288px">User</div>
<div class="t m" style="left:197px;top:288px;width:227px;overflow:hidden">Heap (ID 5)</div>
<div class="t m" style="left:632px;top:288px">PRV</div>
<div class="t m blue" style="left:676px;top:288px">-RW--</div>
<div class="t m" style="left:761px;top:288px">-RW--</div>
<div class="t m" style="left:6px;top:299px">00376000</div>
<div class="t m" style="left:70px;top:299px">0000A000</div>
<svg class="a" style="left:130px;top:299px" width="11" height="11" viewBox="0 0 11 11"><defs><linearGradient id="ub" x1="0" y1="0" x2="1" y2="0"><stop offset="0" stop-color="#d83838"/><stop offset="0.6" stop-color="#f87a7a"/><stop offset="1" stop-color="#d84040"/></linearGradient><linearGradient id="uh" x1="0" y1="0" x2="0" y2="1"><stop offset="0" stop-color="#a8581c"/><stop offset="0.45" stop-color="#f2c48a"/><stop offset="1" stop-color="#e8b070"/></linearGradient></defs><path d="M3.3 2.2Q3.5 0 5.6 0Q7.7 0 7.8 2.2L7.6 6.5Q5.6 7.5 3.5 6.5Z" fill="#7a2a10"/><ellipse cx="5.6" cy="3.4" rx="2.1" ry="3" fill="url(#uh)"/><path d="M0.5 10.5Q0.6 7.2 3.5 6.5L5.6 7L7.6 6.5Q10.5 7.2 10.5 10.5Z" fill="url(#ub)"/><rect x="5" y="6.8" width="1.2" height="3.5" fill="#e8e8e8"/></svg>
<div class="t m" style="left:145px;top:299px">User</div>
<div class="t m" style="left:197px;top:299px;width:227px;overflow:hidden">Reserved (00370000)</div>
<div class="t m" style="left:632px;top:299px">PRV</div>
<div class="t m" style="left:761px;top:299px">-RW--</div>
<div class="t m" style="left:6px;top:310px">00380000</div>
<div class="t m" style="left:70px;top:310px">00002000</div>
<svg class="a" style="left:130px;top:310px" width="11" height="11" viewBox="0 0 11 11"><defs><linearGradient id="ub" x1="0" y1="0" x2="1" y2="0"><stop offset="0" stop-color="#d83838"/><stop offset="0.6" stop-color="#f87a7a"/><stop offset="1" stop-color="#d84040"/></linearGradient><linearGradient id="uh" x1="0" y1="0" x2="0" y2="1"><stop offset="0" stop-color="#a8581c"/><stop offset="0.45" stop-color="#f2c48a"/><stop offset="1" stop-color="#e8b070"/></linearGradient></defs><path d="M3.3 2.2Q3.5 0 5.6 0Q7.7 0 7.8 2.2L7.6 6.5Q5.6 7.5 3.5 6.5Z" fill="#7a2a10"/><ellipse cx="5.6" cy="3.4" rx="2.1" ry="3" fill="url(#uh)"/><path d="M0.5 10.5Q0.6 7.2 3.5 6.5L5.6 7L7.6 6.5Q10.5 7.2 10.5 10.5Z" fill="url(#ub)"/><rect x="5" y="6.8" width="1.2" height="3.5" fill="#e8e8e8"/></svg>
<div class="t m" style="left:145px;top:310px">User</div>
<div class="t m" style="left:197px;top:310px;width:227px;overflow:hidden">Heap (ID 6)</div>
<div class="t m" style="left:632px;top:310px">PRV</div>
<div class="t m blue" style="left:676px;top:310px">-RW--</div>
<div class="t m" style="left:761px;top:310px">-RW--</div>
<div class="t m" style="left:6px;top:321px">00382000</div>
<div class="t m" style="left:70px;top:321px">0000E000</div>
<svg class="a" style="left:130px;top:321px" width="11" height="11" viewBox="0 0 11 11"><defs><linearGradient id="ub" x1="0" y1="0" x2="1" y2="0"><stop offset="0" stop-color="#d83838"/><stop offset="0.6" stop-color="#f87a7a"/><stop offset="1" stop-color="#d84040"/></linearGradient><linearGradient id="uh" x1="0" y1="0" x2="0" y2="1"><stop offset="0" stop-color="#a8581c"/><stop offset="0.45" stop-color="#f2c48a"/><stop offset="1" stop-color="#e8b070"/></linearGradient></defs><path d="M3.3 2.2Q3.5 0 5.6 0Q7.7 0 7.8 2.2L7.6 6.5Q5.6 7.5 3.5 6.5Z" fill="#7a2a10"/><ellipse cx="5.6" cy="3.4" rx="2.1" ry="3" fill="url(#uh)"/><path d="M0.5 10.5Q0.6 7.2 3.5 6.5L5.6 7L7.6 6.5Q10.5 7.2 10.5 10.5Z" fill="url(#ub)"/><rect x="5" y="6.8" width="1.2" height="3.5" fill="#e8e8e8"/></svg>
<div class="t m" style="left:145px;top:321px">User</div>
<div class="t m" style="left:197px;top:321px;width:227px;overflow:hidden">Reserved (00380000)</div>
<div class="t m" style="left:632px;top:321px">PRV</div>
<div class="t m" style="left:761px;top:321px">-RW--</div>
<div class="t m" style="left:6px;top:332px">00390000</div>
<div class="t m" style="left:70px;top:332px">00001000</div>
<svg class="a" style="left:130px;top:332px" width="11" height="11" viewBox="0 0 11 11"><defs><linearGradient id="ub" x1="0" y1="0" x2="1" y2="0"><stop offset="0" stop-color="#d83838"/><stop offset="0.6" stop-color="#f87a7a"/><stop offset="1" stop-color="#d84040"/></linearGradient><linearGradient id="uh" x1="0" y1="0" x2="0" y2="1"><stop offset="0" stop-color="#a8581c"/><stop offset="0.45" stop-color="#f2c48a"/><stop offset="1" stop-color="#e8b070"/></linearGradient></defs><path d="M3.3 2.2Q3.5 0 5.6 0Q7.7 0 7.8 2.2L7.6 6.5Q5.6 7.5 3.5 6.5Z" fill="#7a2a10"/><ellipse cx="5.6" cy="3.4" rx="2.1" ry="3" fill="url(#uh)"/><path d="M0.5 10.5Q0.6 7.2 3.5 6.5L5.6 7L7.6 6.5Q10.5 7.2 10.5 10.5Z" fill="url(#ub)"/><rect x="5" y="6.8" width="1.2" height="3.5" fill="#e8e8e8"/></svg>
<div class="t m" style="left:145px;top:332px">User</div>
<div class="t m" style="left:197px;top:332px;width:227px;overflow:hidden">dll3.dll</div>
<div class="t m" style="left:632px;top:332px">IMG</div>
<div class="t m blue" style="left:676px;top:332px">-R---</div>
<div class="t m" style="left:761px;top:332px">ERWC-</div>
<div class="t m" style="left:6px;top:343px">00391000</div>
<div class="t m" style="left:70px;top:343px">00006000</div>
<svg class="a" style="left:130px;top:343px" width="11" height="11" viewBox="0 0 11 11"><defs><linearGradient id="ub" x1="0" y1="0" x2="1" y2="0"><stop offset="0" stop-color="#d83838"/><stop offset="0.6" stop-color="#f87a7a"/><stop offset="1" stop-color="#d84040"/></linearGradient><linearGradient id="uh" x1="0" y1="0" x2="0" y2="1"><stop offset="0" stop-color="#a8581c"/><stop offset="0.45" stop-color="#f2c48a"/><stop offset="1" stop-color="#e8b070"/></linearGradient></defs><path d="M3.3 2.2Q3.5 0 5.6 0Q7.7 0 7.8 2.2L7.6 6.5Q5.6 7.5 3.5 6.5Z" fill="#7a2a10"/><ellipse cx="5.6" cy="3.4" rx="2.1" ry="3" fill="url(#uh)"/><path d="M0.5 10.5Q0.6 7.2 3.5 6.5L5.6 7L7.6 6.5Q10.5 7.2 10.5 10.5Z" fill="url(#ub)"/><rect x="5" y="6.8" width="1.2" height="3.5" fill="#e8e8e8"/></svg>
<div class="t m" style="left:145px;top:343px">User</div>
<div class="t m blue" style="left:197px;top:343px"> &quot;.text&quot;</div>
<div class="t m" style="left:428px;top:343px">Executable code</div>
<div class="t m" style="left:632px;top:343px">IMG</div>
<div class="t m blue" style="left:676px;top:343px">E----</div>
<div class="t m" style="left:761px;top:343px">ERWC-</div>
<div class="t m" style="left:6px;top:354px">00397000</div>
<div class="t m" style="left:70px;top:354px">00001000</div>
<svg class="a" style="left:130px;top:354px" width="11" height="11" viewBox="0 0 11 11"><defs><linearGradient id="ub" x1="0" y1="0" x2="1" y2="0"><stop offset="0" stop-color="#d83838"/><stop offset="0.6" stop-color="#f87a7a"/><stop offset="1" stop-color="#d84040"/></linearGradient><linearGradient id="uh" x1="0" y1="0" x2="0" y2="1"><stop offset="0" stop-color="#a8581c"/><stop offset="0.45" stop-color="#f2c48a"/><stop offset="1" stop-color="#e8b070"/></linearGradient></defs><path d="M3.3 2.2Q3.5 0 5.6 0Q7.7 0 7.8 2.2L7.6 6.5Q5.6 7.5 3.5 6.5Z" fill="#7a2a10"/><ellipse cx="5.6" cy="3.4" rx="2.1" ry="3" fill="url(#uh)"/><path d="M0.5 10.5Q0.6 7.2 3.5 6.5L5.6 7L7.6 6.5Q10.5 7.2 10.5 10.5Z" fill="url(#ub)"/><rect x="5" y="6.8" width="1.2" height="3.5" fill="#e8e8e8"/></svg>
<div class="t m" style="left:145px;top:354px">User</div>
<div class="t m blue" style="left:197px;top:354px"> &quot;.rdata&quot;</div>
<div class="t m" style="left:428px;top:354px">Read-only initialized data</div>
<div class="t m" style="left:632px;top:354px">IMG</div>
<div class="t m blue" style="left:676px;top:354px">-R---</div>
<div class="t m" style="left:761px;top:354px">ERWC-</div>
<div class="t m" style="left:6px;top:365px">00398000</div>
<div class="t m" style="left:70px;top:365px">00005000</div>
<svg class="a" style="left:130px;top:365px" width="11" height="11" viewBox="0 0 11 11"><defs><linearGradient id="ub" x1="0" y1="0" x2="1" y2="0"><stop offset="0" stop-color="#d83838"/><stop offset="0.6" stop-color="#f87a7a"/><stop offset="1" stop-color="#d84040"/></linearGradient><linearGradient id="uh" x1="0" y1="0" x2="0" y2="1"><stop offset="0" stop-color="#a8581c"/><stop offset="0.45" stop-color="#f2c48a"/><stop offset="1" stop-color="#e8b070"/></linearGradient></defs><path d="M3.3 2.2Q3.5 0 5.6 0Q7.7 0 7.8 2.2L7.6 6.5Q5.6 7.5 3.5 6.5Z" fill="#7a2a10"/><ellipse cx="5.6" cy="3.4" rx="2.1" ry="3" fill="url(#uh)"/><path d="M0.5 10.5Q0.6 7.2 3.5 6.5L5.6 7L7.6 6.5Q10.5 7.2 10.5 10.5Z" fill="url(#ub)"/><rect x="5" y="6.8" width="1.2" height="3.5" fill="#e8e8e8"/></svg>
<div class="t m" style="left:145px;top:365px">User</div>
<div class="t m blue" style="left:197px;top:365px"> &quot;.data&quot;</div>
<div class="t m" style="left:428px;top:365px">Initialized data</div>
<div class="t m" style="left:632px;top:365px">IMG</div>
<div class="t m blue" style="left:676px;top:365px">-RW--</div>
<div class="t m" style="left:761px;top:365px">ERWC-</div>
<div class="t m" style="left:6px;top:376px">0039D000</div>
<div class="t m" style="left:70px;top:376px">00001000</div>
<svg class="a" style="left:130px;top:376px" width="11" height="11" viewBox="0 0 11 11"><defs><linearGradient id="ub" x1="0" y1="0" x2="1" y2="0"><stop offset="0" stop-color="#d83838"/><stop offset="0.6" stop-color="#f87a7a"/><stop offset="1" stop-color="#d84040"/></linearGradient><linearGradient id="uh" x1="0" y1="0" x2="0" y2="1"><stop offset="0" stop-color="#a8581c"/><stop offset="0.45" stop-color="#f2c48a"/><stop offset="1" stop-color="#e8b070"/></linearGradient></defs><path d="M3.3 2.2Q3.5 0 5.6 0Q7.7 0 7.8 2.2L7.6 6.5Q5.6 7.5 3.5 6.5Z" fill="#7a2a10"/><ellipse cx="5.6" cy="3.4" rx="2.1" ry="3" fill="url(#uh)"/><path d="M0.5 10.5Q0.6 7.2 3.5 6.5L5.6 7L7.6 6.5Q10.5 7.2 10.5 10.5Z" fill="url(#ub)"/><rect x="5" y="6.8" width="1.2" height="3.5" fill="#e8e8e8"/></svg>
<div class="t m" style="left:145px;top:376px">User</div>
<div class="t m blue" style="left:197px;top:376px"> &quot;.reloc&quot;</div>
<div class="t m" style="left:428px;top:376px">Base relocations</div>
<div class="t m" style="left:632px;top:376px">IMG</div>
<div class="t m blue" style="left:676px;top:376px">-R---</div>
<div class="t m" style="left:761px;top:376px">ERWC-</div>
<div class="t m" style="left:6px;top:387px">003A0000</div>
<div class="t m" style="left:70px;top:387px">00004000</div>
<svg class="a" style="left:130px;top:387px" width="11" height="11" viewBox="0 0 11 11"><defs><linearGradient id="ub" x1="0" y1="0" x2="1" y2="0"><stop offset="0" stop-color="#d83838"/><stop offset="0.6" stop-color="#f87a7a"/><stop offset="1" stop-color="#d84040"/></linearGradient><linearGradient id="uh" x1="0" y1="0" x2="0" y2="1"><stop offset="0" stop-color="#a8581c"/><stop offset="0.45" stop-color="#f2c48a"/><stop offset="1" stop-color="#e8b070"/></linearGradient></defs><path d="M3.3 2.2Q3.5 0 5.6 0Q7.7 0 7.8 2.2L7.6 6.5Q5.6 7.5 3.5 6.5Z" fill="#7a2a10"/><ellipse cx="5.6" cy="3.4" rx="2.1" ry="3" fill="url(#uh)"/><path d="M0.5 10.5Q0.6 7.2 3.5 6.5L5.6 7L7.6 6.5Q10.5 7.2 10.5 10.5Z" fill="url(#ub)"/><rect x="5" y="6.8" width="1.2" height="3.5" fill="#e8e8e8"/></svg>
<div class="t m" style="left:145px;top:387px">User</div>
<div class="t m" style="left:197px;top:387px;width:227px;overflow:hidden">Heap (ID 7)</div>
<div class="t m" style="left:632px;top:387px">PRV</div>
<div class="t m blue" style="left:676px;top:387px">-RW--</div>
<div class="t m" style="left:761px;top:387px">-RW--</div>
<div class="t m" style="left:6px;top:398px">003A4000</div>
<div class="t m" style="left:70px;top:398px">0000C000</div>
<svg class="a" style="left:130px;top:398px" width="11" height="11" viewBox="0 0 11 11"><defs><linearGradient id="ub" x1="0" y1="0" x2="1" y2="0"><stop offset="0" stop-color="#d83838"/><stop offset="0.6" stop-color="#f87a7a"/><stop offset="1" stop-color="#d84040"/></linearGradient><linearGradient id="uh" x1="0" y1="0" x2="0" y2="1"><stop offset="0" stop-color="#a8581c"/><stop offset="0.45" stop-color="#f2c48a"/><stop offset="1" stop-color="#e8b070"/></linearGradient></defs><path d="M3.3 2.2Q3.5 0 5.6 0Q7.7 0 7.8 2.2L7.6 6.5Q5.6 7.5 3.5 6.5Z" fill="#7a2a10"/><ellipse cx="5.6" cy="3.4" rx="2.1" ry="3" fill="url(#uh)"/><path d="M0.5 10.5Q0.6 7.2 3.5 6.5L5.6 7L7.6 6.5Q10.5 7.2 10.5 10.5Z" fill="url(#ub)"/><rect x="5" y="6.8" width="1.2" height="3.5" fill="#e8e8e8"/></svg>
<div class="t m" style="left:145px;top:398px">User</div>
<div class="t m" style="left:197px;top:398px;width:227px;overflow:hidden">Reserved (003A0000)</div>
<div class="t m" style="left:632px;top:398px">PRV</div>
<div class="t m" style="left:761px;top:398px">-RW--</div>
<div class="t m" style="left:6px;top:409px">00400000</div>
<div class="t m" style="left:70px;top:409px">00001000</div>
<svg class="a" style="left:130px;top:409px" width="11" height="11" viewBox="0 0 11 11"><defs><linearGradient id="ub" x1="0" y1="0" x2="1" y2="0"><stop offset="0" stop-color="#d83838"/><stop offset="0.6" stop-color="#f87a7a"/><stop offset="1" stop-color="#d84040"/></linearGradient><linearGradient id="uh" x1="0" y1="0" x2="0" y2="1"><stop offset="0" stop-color="#a8581c"/><stop offset="0.45" stop-color="#f2c48a"/><stop offset="1" stop-color="#e8b070"/></linearGradient></defs><path d="M3.3 2.2Q3.5 0 5.6 0Q7.7 0 7.8 2.2L7.6 6.5Q5.6 7.5 3.5 6.5Z" fill="#7a2a10"/><ellipse cx="5.6" cy="3.4" rx="2.1" ry="3" fill="url(#uh)"/><path d="M0.5 10.5Q0.6 7.2 3.5 6.5L5.6 7L7.6 6.5Q10.5 7.2 10.5 10.5Z" fill="url(#ub)"/><rect x="5" y="6.8" width="1.2" height="3.5" fill="#e8e8e8"/></svg>
<div class="t m" style="left:145px;top:409px">User</div>
<div class="t m" style="left:197px;top:409px;width:227px;overflow:hidden">lab09-03.exe</div>
<div class="t m" style="left:632px;top:409px">IMG</div>
<div class="t m blue" style="left:676px;top:409px">-R---</div>
<div class="t m" style="left:761px;top:409px">ERWC-</div>
<div class="t m green" style="left:6px;top:420px">00401000</div>
<div class="t m" style="left:70px;top:420px">00004000</div>
<svg class="a" style="left:130px;top:420px" width="11" height="11" viewBox="0 0 11 11"><defs><linearGradient id="ub" x1="0" y1="0" x2="1" y2="0"><stop offset="0" stop-color="#d83838"/><stop offset="0.6" stop-color="#f87a7a"/><stop offset="1" stop-color="#d84040"/></linearGradient><linearGradient id="uh" x1="0" y1="0" x2="0" y2="1"><stop offset="0" stop-color="#a8581c"/><stop offset="0.45" stop-color="#f2c48a"/><stop offset="1" stop-color="#e8b070"/></linearGradient></defs><path d="M3.3 2.2Q3.5 0 5.6 0Q7.7 0 7.8 2.2L7.6 6.5Q5.6 7.5 3.5 6.5Z" fill="#7a2a10"/><ellipse cx="5.6" cy="3.4" rx="2.1" ry="3" fill="url(#uh)"/><path d="M0.5 10.5Q0.6 7.2 3.5 6.5L5.6 7L7.6 6.5Q10.5 7.2 10.5 10.5Z" fill="url(#ub)"/><rect x="5" y="6.8" width="1.2" height="3.5" fill="#e8e8e8"/></svg>
<div class="t m" style="left:145px;top:420px">User</div>
<div class="t m blue" style="left:197px;top:420px"> &quot;.text&quot;</div>
<div class="t m" style="left:428px;top:420px">Executable code</div>
<div class="t m" style="left:632px;top:420px">IMG</div>
<div class="t m blue" style="left:676px;top:420px">ER---</div>
<div class="t m" style="left:761px;top:420px">ERWC-</div>
<div class="t m" style="left:6px;top:431px">00405000</div>
<div class="t m" style="left:70px;top:431px">00001000</div>
<svg class="a" style="left:130px;top:431px" width="11" height="11" viewBox="0 0 11 11"><defs><linearGradient id="ub" x1="0" y1="0" x2="1" y2="0"><stop offset="0" stop-color="#d83838"/><stop offset="0.6" stop-color="#f87a7a"/><stop offset="1" stop-color="#d84040"/></linearGradient><linearGradient id="uh" x1="0" y1="0" x2="0" y2="1"><stop offset="0" stop-color="#a8581c"/><stop offset="0.45" stop-color="#f2c48a"/><stop offset="1" stop-color="#e8b070"/></linearGradient></defs><path d="M3.3 2.2Q3.5 0 5.6 0Q7.7 0 7.8 2.2L7.6 6.5Q5.6 7.5 3.5 6.5Z" fill="#7a2a10"/><ellipse cx="5.6" cy="3.4" rx="2.1" ry="3" fill="url(#uh)"/><path d="M0.5 10.5Q0.6 7.2 3.5 6.5L5.6 7L7.6 6.5Q10.5 7.2 10.5 10.5Z" fill="url(#ub)"/><rect x="5" y="6.8" width="1.2" height="3.5" fill="#e8e8e8"/></svg>
<div class="t m" style="left:145px;top:431px">User</div>
<div class="t m blue" style="left:197px;top:431px"> &quot;.rdata&quot;</div>
<div class="t m" style="left:428px;top:431px">Read-only initialized data</div>
<div class="t m" style="left:632px;top:431px">IMG</div>
<div class="t m blue" style="left:676px;top:431px">-R---</div>
<div class="t m" style="left:761px;top:431px">ERWC-</div>
<div class="t m" style="left:6px;top:442px">00406000</div>
<div class="t m" style="left:70px;top:442px">00003000</div>
<svg class="a" style="left:130px;top:442px" width="11" height="11" viewBox="0 0 11 11"><defs><linearGradient id="ub" x1="0" y1="0" x2="1" y2="0"><stop offset="0" stop-color="#d83838"/><stop offset="0.6" stop-color="#f87a7a"/><stop offset="1" stop-color="#d84040"/></linearGradient><linearGradient id="uh" x1="0" y1="0" x2="0" y2="1"><stop offset="0" stop-color="#a8581c"/><stop offset="0.45" stop-color="#f2c48a"/><stop offset="1" stop-color="#e8b070"/></linearGradient></defs><path d="M3.3 2.2Q3.5 0 5.6 0Q7.7 0 7.8 2.2L7.6 6.5Q5.6 7.5 3.5 6.5Z" fill="#7a2a10"/><ellipse cx="5.6" cy="3.4" rx="2.1" ry="3" fill="url(#uh)"/><path d="M0.5 10.5Q0.6 7.2 3.5 6.5L5.6 7L7.6 6.5Q10.5 7.2 10.5 10.5Z" fill="url(#ub)"/><rect x="5" y="6.8" width="1.2" height="3.5" fill="#e8e8e8"/></svg>
<div class="t m" style="left:145px;top:442px">User</div>
<div class="t m blue" style="left:197px;top:442px"> &quot;.data&quot;</div>
<div class="t m" style="left:428px;top:442px">Initialized data</div>
<div class="t m" style="left:632px;top:442px">IMG</div>
<div class="t m blue" style="left:676px;top:442px">-RWC-</div>
<div class="t m" style="left:761px;top:442px">ERWC-</div>
<div class="t m" style="left:6px;top:453px">10000000</div>
<div class="t m" style="left:70px;top:453px">00001000</div>
<svg class="a" style="left:130px;top:453px" width="11" height="11" viewBox="0 0 11 11"><defs><linearGradient id="ub" x1="0" y1="0" x2="1" y2="0"><stop offset="0" stop-color="#d83838"/><stop offset="0.6" stop-color="#f87a7a"/><stop offset="1" stop-color="#d84040"/></linearGradient><linearGradient id="uh" x1="0" y1="0" x2="0" y2="1"><stop offset="0" stop-color="#a8581c"/><stop offset="0.45" stop-color="#f2c48a"/><stop offset="1" stop-color="#e8b070"/></linearGradient></defs><path d="M3.3 2.2Q3.5 0 5.6 0Q7.7 0 7.8 2.2L7.6 6.5Q5.6 7.5 3.5 6.5Z" fill="#7a2a10"/><ellipse cx="5.6" cy="3.4" rx="2.1" ry="3" fill="url(#uh)"/><path d="M0.5 10.5Q0.6 7.2 3.5 6.5L5.6 7L7.6 6.5Q10.5 7.2 10.5 10.5Z" fill="url(#ub)"/><rect x="5" y="6.8" width="1.2" height="3.5" fill="#e8e8e8"/></svg>
<div class="t m" style="left:145px;top:453px">User</div>
<div class="t m" style="left:197px;top:453px;width:227px;overflow:hidden">dll1.dll</div>
<div class="t m" style="left:632px;top:453px">IMG</div>
<div class="t m blue" style="left:676px;top:453px">-R---</div>
<div class="t m" style="left:761px;top:453px">ERWC-</div>
<div class="t m" style="left:6px;top:464px">10001000</div>
<div class="t m" style="left:70px;top:464px">00006000</div>
<svg class="a" style="left:130px;top:464px" width="11" height="11" viewBox="0 0 11 11"><defs><linearGradient id="ub" x1="0" y1="0" x2="1" y2="0"><stop offset="0" stop-color="#d83838"/><stop offset="0.6" stop-color="#f87a7a"/><stop offset="1" stop-color="#d84040"/></linearGradient><linearGradient id="uh" x1="0" y1="0" x2="0" y2="1"><stop offset="0" stop-color="#a8581c"/><stop offset="0.45" stop-color="#f2c48a"/><stop offset="1" stop-color="#e8b070"/></linearGradient></defs><path d="M3.3 2.2Q3.5 0 5.6 0Q7.7 0 7.8 2.2L7.6 6.5Q5.6 7.5 3.5 6.5Z" fill="#7a2a10"/><ellipse cx="5.6" cy="3.4" rx="2.1" ry="3" fill="url(#uh)"/><path d="M0.5 10.5Q0.6 7.2 3.5 6.5L5.6 7L7.6 6.5Q10.5 7.2 10.5 10.5Z" fill="url(#ub)"/><rect x="5" y="6.8" width="1.2" height="3.5" fill="#e8e8e8"/></svg>
<div class="t m" style="left:145px;top:464px">User</div>
<div class="t m blue" style="left:197px;top:464px"> &quot;.text&quot;</div>
<div class="t m" style="left:428px;top:464px">Executable code</div>
<div class="t m" style="left:632px;top:464px">IMG</div>
<div class="t m blue" style="left:676px;top:464px">ER---</div>
<div class="t m" style="left:761px;top:464px">ERWC-</div>
<div class="t m" style="left:6px;top:475px">10007000</div>
<div class="t m" style="left:70px;top:475px">00001000</div>
<svg class="a" style="left:130px;top:475px" width="11" height="11" viewBox="0 0 11 11"><defs><linearGradient id="ub" x1="0" y1="0" x2="1" y2="0"><stop offset="0" stop-color="#d83838"/><stop offset="0.6" stop-color="#f87a7a"/><stop offset="1" stop-color="#d84040"/></linearGradient><linearGradient id="uh" x1="0" y1="0" x2="0" y2="1"><stop offset="0" stop-color="#a8581c"/><stop offset="0.45" stop-color="#f2c48a"/><stop offset="1" stop-color="#e8b070"/></linearGradient></defs><path d="M3.3 2.2Q3.5 0 5.6 0Q7.7 0 7.8 2.2L7.6 6.5Q5.6 7.5 3.5 6.5Z" fill="#7a2a10"/><ellipse cx="5.6" cy="3.4" rx="2.1" ry="3" fill="url(#uh)"/><path d="M0.5 10.5Q0.6 7.2 3.5 6.5L5.6 7L7.6 6.5Q10.5 7.2 10.5 10.5Z" fill="url(#ub)"/><rect x="5" y="6.8" width="1.2" height="3.5" fill="#e8e8e8"/></svg>
<div class="t m" style="left:145px;top:475px">User</div>
<div class="t m blue" style="left:197px;top:475px"> &quot;.rdata&quot;</div>
<div class="t m" style="left:428px;top:475px">Read-only initialized data</div>
<div class="t m" style="left:632px;top:475px">IMG</div>
<div class="t m blue" style="left:676px;top:475px">-R---</div>
<div class="t m" style="left:761px;top:475px">ERWC-</div>
<div class="t m" style="left:6px;top:486px">10008000</div>
<div class="t m" style="left:70px;top:486px">00005000</div>
<svg class="a" style="left:130px;top:486px" width="11" height="11" viewBox="0 0 11 11"><defs><linearGradient id="ub" x1="0" y1="0" x2="1" y2="0"><stop offset="0" stop-color="#d83838"/><stop offset="0.6" stop-color="#f87a7a"/><stop offset="1" stop-color="#d84040"/></linearGradient><linearGradient id="uh" x1="0" y1="0" x2="0" y2="1"><stop offset="0" stop-color="#a8581c"/><stop offset="0.45" stop-color="#f2c48a"/><stop offset="1" stop-color="#e8b070"/></linearGradient></defs><path d="M3.3 2.2Q3.5 0 5.6 0Q7.7 0 7.8 2.2L7.6 6.5Q5.6 7.5 3.5 6.5Z" fill="#7a2a10"/><ellipse cx="5.6" cy="3.4" rx="2.1" ry="3" fill="url(#uh)"/><path d="M0.5 10.5Q0.6 7.2 3.5 6.5L5.6 7L7.6 6.5Q10.5 7.2 10.5 10.5Z" fill="url(#ub)"/><rect x="5" y="6.8" width="1.2" height="3.5" fill="#e8e8e8"/></svg>
<div class="t m" style="left:145px;top:486px">User</div>
<div class="t m blue" style="left:197px;top:486px"> &quot;.data&quot;</div>
<div class="t m" style="left:428px;top:486px">Initialized data</div>
<div class="t m" style="left:632px;top:486px">IMG</div>
<div class="t m blue" style="left:676px;top:486px">-RW--</div>
<div class="t m" style="left:761px;top:486px">ERWC-</div>
<div class="t m" style="left:6px;top:497px">1000D000</div>
<div class="t m" style="left:70px;top:497px">00001000</div>
<svg class="a" style="left:130px;top:497px" width="11" height="11" viewBox="0 0 11 11"><defs><linearGradient id="ub" x1="0" y1="0" x2="1" y2="0"><stop offset="0" stop-color="#d83838"/><stop offset="0.6" stop-color="#f87a7a"/><stop offset="1" stop-color="#d84040"/></linearGradient><linearGradient id="uh" x1="0" y1="0" x2="0" y2="1"><stop offset="0" stop-color="#a8581c"/><stop offset="0.45" stop-color="#f2c48a"/><stop offset="1" stop-color="#e8b070"/></linearGradient></defs><path d="M3.3 2.2Q3.5 0 5.6 0Q7.7 0 7.8 2.2L7.6 6.5Q5.6 7.5 3.5 6.5Z" fill="#7a2a10"/><ellipse cx="5.6" cy="3.4" rx="2.1" ry="3" fill="url(#uh)"/><path d="M0.5 10.5Q0.6 7.2 3.5 6.5L5.6 7L7.6 6.5Q10.5 7.2 10.5 10.5Z" fill="url(#ub)"/><rect x="5" y="6.8" width="1.2" height="3.5" fill="#e8e8e8"/></svg>
<div class="t m" style="left:145px;top:497px">User</div>
<div class="t m blue" style="left:197px;top:497px"> &quot;.reloc&quot;</div>
<div class="t m" style="left:428px;top:497px">Base relocations</div>
<div class="t m" style="left:632px;top:497px">IMG</div>
<div class="t m blue" style="left:676px;top:497px">-R---</div>
<div class="t m" style="left:761px;top:497px">ERWC-</div>
<div class="t m" style="left:6px;top:508px">5B860000</div>
<div class="t m" style="left:70px;top:508px">00001000</div>
<svg class="a" style="left:131px;top:508px" width="10" height="11" viewBox="0 0 10 11"><rect x="0.5" y="0.5" width="9" height="7" rx="1" fill="#3a3a40" stroke="#9a9a9a"/><path d="M1.5 6L3.5 6L4.3 2.5L5 6L7 3.5L8.5 5.5" stroke="#5cc8a8" stroke-width="1.1" fill="none"/><circle cx="4.6" cy="9.3" r="1.3" fill="#30c030"/></svg>
<div class="t m" style="left:145px;top:508px">System</div>
<div class="t m" style="left:197px;top:508px;width:227px;overflow:hidden">netapi32.dll</div>
<div class="t m" style="left:632px;top:508px">IMG</div>
<div class="t m blue" style="left:676px;top:508px">-R---</div>
<div class="t m" style="left:761px;top:508px">ERWC-</div>
<div class="t m" style="left:6px;top:519px">5B861000</div>
<div class="t m" style="left:70px;top:519px">0004D000</div>
<svg class="a" style="left:131px;top:519px" width="10" height="11" viewBox="0 0 10 11"><rect x="0.5" y="0.5" width="9" height="7" rx="1" fill="#3a3a40" stroke="#9a9a9a"/><path d="M1.5 6L3.5 6L4.3 2.5L5 6L7 3.5L8.5 5.5" stroke="#5cc8a8" stroke-width="1.1" fill="none"/><circle cx="4.6" cy="9.3" r="1.3" fill="#30c030"/></svg>
<div class="t m" style="left:145px;top:519px">System</div>
<div class="t m blue" style="left:197px;top:519px"> &quot;.text&quot;</div>
<div class="t m" style="left:428px;top:519px">Executable code</div>
<div class="t m" style="left:632px;top:519px">IMG</div>
<div class="t m blue" style="left:676px;top:519px">ER---</div>
<div class="t m" style="left:761px;top:519px">ERWC-</div>
<div class="t m" style="left:6px;top:530px">5B8AE000</div>
<div class="t m" style="left:70px;top:530px">00003000</div>
<svg class="a" style="left:131px;top:530px" width="10" height="11" viewBox="0 0 10 11"><rect x="0.5" y="0.5" width="9" height="7" rx="1" fill="#3a3a40" stroke="#9a9a9a"/><path d="M1.5 6L3.5 6L4.3 2.5L5 6L7 3.5L8.5 5.5" stroke="#5cc8a8" stroke-width="1.1" fill="none"/><circle cx="4.6" cy="9.3" r="1.3" fill="#30c030"/></svg>
<div class="t m" style="left:145px;top:530px">System</div>
<div class="t m blue" style="left:197px;top:530px"> &quot;.data&quot;</div>
<div class="t m" style="left:428px;top:530px">Initialized data</div>
<div class="t m" style="left:632px;top:530px">IMG</div>
<div class="t m blue" style="left:676px;top:530px">-RW--</div>
<div class="t m" style="left:761px;top:530px">ERWC-</div>
<div class="t m" style="left:6px;top:541px">5B8B1000</div>
<div class="t m" style="left:70px;top:541px">00001000</div>
<svg class="a" style="left:131px;top:541px" width="10" height="11" viewBox="0 0 10 11"><rect x="0.5" y="0.5" width="9" height="7" rx="1" fill="#3a3a40" stroke="#9a9a9a"/><path d="M1.5 6L3.5 6L4.3 2.5L5 6L7 3.5L8.5 5.5" stroke="#5cc8a8" stroke-width="1.1" fill="none"/><circle cx="4.6" cy="9.3" r="1.3" fill="#30c030"/></svg>
<div class="t m" style="left:145px;top:541px">System</div>
<div class="t m blue" style="left:197px;top:541px"> &quot;.rsrc&quot;</div>
<div class="t m" style="left:428px;top:541px">Resources</div>
<div class="t m" style="left:632px;top:541px">IMG</div>
<div class="t m blue" style="left:676px;top:541px">-R---</div>
<div class="t m" style="left:761px;top:541px">ERWC-</div>
<div class="t m" style="left:6px;top:552px">5B8B2000</div>
<div class="t m" style="left:70px;top:552px">00003000</div>
<svg class="a" style="left:131px;top:552px" width="10" height="11" viewBox="0 0 10 11"><rect x="0.5" y="0.5" width="9" height="7" rx="1" fill="#3a3a40" stroke="#9a9a9a"/><path d="M1.5 6L3.5 6L4.3 2.5L5 6L7 3.5L8.5 5.5" stroke="#5cc8a8" stroke-width="1.1" fill="none"/><circle cx="4.6" cy="9.3" r="1.3" fill="#30c030"/></svg>
<div class="t m" style="left:145px;top:552px">System</div>
<div class="t m blue" style="left:197px;top:552px"> &quot;.reloc&quot;</div>
<div class="t m" style="left:428px;top:552px">Base relocations</div>
<div class="t m" style="left:632px;top:552px">IMG</div>
<div class="t m blue" style="left:676px;top:552px">-R---</div>
<div class="t m" style="left:761px;top:552px">ERWC-</div>
<div class="t m" style="left:6px;top:563px">77C10000</div>
<div class="t m" style="left:70px;top:563px">00001000</div>
<svg class="a" style="left:131px;top:563px" width="10" height="11" viewBox="0 0 10 11"><rect x="0.5" y="0.5" width="9" height="7" rx="1" fill="#3a3a40" stroke="#9a9a9a"/><path d="M1.5 6L3.5 6L4.3 2.5L5 6L7 3.5L8.5 5.5" stroke="#5cc8a8" stroke-width="1.1" fill="none"/><circle cx="4.6" cy="9.3" r="1.3" fill="#30c030"/></svg>
<div class="t m" style="left:145px;top:563px">System</div>
<div class="t m" style="left:197px;top:563px;width:227px;overflow:hidden">msvcrt.dll</div>
<div class="t m" style="left:632px;top:563px">IMG</div>
<div class="t m blue" style="left:676px;top:563px">-R---</div>
<div class="t m" style="left:761px;top:563px">ERWC-</div>
<div class="t m" style="left:6px;top:574px">77C11000</div>
<div class="t m" style="left:70px;top:574px">0004C000</div>
<svg class="a" style="left:131px;top:574px" width="10" height="11" viewBox="0 0 10 11"><rect x="0.5" y="0.5" width="9" height="7" rx="1" fill="#3a3a40" stroke="#9a9a9a"/><path d="M1.5 6L3.5 6L4.3 2.5L5 6L7 3.5L8.5 5.5" stroke="#5cc8a8" stroke-width="1.1" fill="none"/><circle cx="4.6" cy="9.3" r="1.3" fill="#30c030"/></svg>
<div class="t m" style="left:145px;top:574px">System</div>
<div class="t m blue" style="left:197px;top:574px"> &quot;.text&quot;</div>
<div class="t m" style="left:428px;top:574px">Executable code</div>
<div class="t m" style="left:632px;top:574px">IMG</div>
<div class="t m blue" style="left:676px;top:574px">ER---</div>
<div class="t m" style="left:761px;top:574px">ERWC-</div>
<div class="t m" style="left:6px;top:585px">77C5D000</div>
<div class="t m" style="left:70px;top:585px">00007000</div>
<svg class="a" style="left:131px;top:585px" width="10" height="11" viewBox="0 0 10 11"><rect x="0.5" y="0.5" width="9" height="7" rx="1" fill="#3a3a40" stroke="#9a9a9a"/><path d="M1.5 6L3.5 6L4.3 2.5L5 6L7 3.5L8.5 5.5" stroke="#5cc8a8" stroke-width="1.1" fill="none"/><circle cx="4.6" cy="9.3" r="1.3" fill="#30c030"/></svg>
<div class="t m" style="left:145px;top:585px">System</div>
<div class="t m blue" style="left:197px;top:585px"> &quot;.data&quot;</div>
<div class="t m" style="left:428px;top:585px">Initialized data</div>
<div class="t m" style="left:632px;top:585px">IMG</div>
<div class="t m blue" style="left:676px;top:585px">-RWC-</div>
<div class="t m" style="left:761px;top:585px">ERWC-</div>
<div class="t m" style="left:6px;top:596px">77C64000</div>
<div class="t m" style="left:70px;top:596px">00001000</div>
<svg class="a" style="left:131px;top:596px" width="10" height="11" viewBox="0 0 10 11"><rect x="0.5" y="0.5" width="9" height="7" rx="1" fill="#3a3a40" stroke="#9a9a9a"/><path d="M1.5 6L3.5 6L4.3 2.5L5 6L7 3.5L8.5 5.5" stroke="#5cc8a8" stroke-width="1.1" fill="none"/><circle cx="4.6" cy="9.3" r="1.3" fill="#30c030"/></svg>
<div class="t m" style="left:145px;top:596px">System</div>
<div class="t m blue" style="left:197px;top:596px"> &quot;.rsrc&quot;</div>
<div class="t m" style="left:428px;top:596px">Resources</div>
<div class="t m" style="left:632px;top:596px">IMG</div>
<div class="t m blue" style="left:676px;top:596px">-R---</div>
<div class="t m" style="left:761px;top:596px">ERWC-</div>
<div class="t m" style="left:6px;top:607px">77C65000</div>
<div class="t m" style="left:70px;top:607px">00003000</div>
<svg class="a" style="left:131px;top:607px" width="10" height="11" viewBox="0 0 10 11"><rect x="0.5" y="0.5" width="9" height="7" rx="1" fill="#3a3a40" stroke="#9a9a9a"/><path d="M1.5 6L3.5 6L4.3 2.5L5 6L7 3.5L8.5 5.5" stroke="#5cc8a8" stroke-width="1.1" fill="none"/><circle cx="4.6" cy="9.3" r="1.3" fill="#30c030"/></svg>
<div class="t m" style="left:145px;top:607px">System</div>
<div class="t m blue" style="left:197px;top:607px"> &quot;.reloc&quot;</div>
<div class="t m" style="left:428px;top:607px">Base relocations</div>
<div class="t m" style="left:632px;top:607px">IMG</div>
<div class="t m blue" style="left:676px;top:607px">-R---</div>
<div class="t m" style="left:761px;top:607px">ERWC-</div>
<div class="t m" style="left:6px;top:618px">77DD0000</div>
<div class="t m" style="left:70px;top:618px">00001000</div>
<svg class="a" style="left:131px;top:618px" width="10" height="11" viewBox="0 0 10 11"><rect x="0.5" y="0.5" width="9" height="7" rx="1" fill="#3a3a40" stroke="#9a9a9a"/><path d="M1.5 6L3.5 6L4.3 2.5L5 6L7 3.5L8.5 5.5" stroke="#5cc8a8" stroke-width="1.1" fill="none"/><circle cx="4.6" cy="9.3" r="1.3" fill="#30c030"/></svg>
<div class="t m" style="left:145px;top:618px">System</div>
<div class="t m" style="left:197px;top:618px;width:227px;overflow:hidden">advapi32.dll</div>
<div class="t m" style="left:632px;top:618px">IMG</div>
<div class="t m blue" style="left:676px;top:618px">-R---</div>
<div class="t m" style="left:761px;top:618px">ERWC-</div>
<div class="t m" style="left:6px;top:629px">77DD1000</div>
<div class="t m" style="left:70px;top:629px">00075000</div>
<svg class="a" style="left:131px;top:629px" width="10" height="11" viewBox="0 0 10 11"><rect x="0.5" y="0.5" width="9" height="7" rx="1" fill="#3a3a40" stroke="#9a9a9a"/><path d="M1.5 6L3.5 6L4.3 2.5L5 6L7 3.5L8.5 5.5" stroke="#5cc8a8" stroke-width="1.1" fill="none"/><circle cx="4.6" cy="9.3" r="1.3" fill="#30c030"/></svg>
<div class="t m" style="left:145px;top:629px">System</div>
<div class="t m blue" style="left:197px;top:629px"> &quot;.text&quot;</div>
<div class="t m" style="left:428px;top:629px">Executable code</div>
<div class="t m" style="left:632px;top:629px">IMG</div>
<div class="t m blue" style="left:676px;top:629px">ER---</div>
<div class="t m" style="left:761px;top:629px">ERWC-</div>
<div class="t m" style="left:6px;top:640px">77E46000</div>
<div class="t m" style="left:70px;top:640px">00005000</div>
<svg class="a" style="left:131px;top:640px" width="10" height="11" viewBox="0 0 10 11"><rect x="0.5" y="0.5" width="9" height="7" rx="1" fill="#3a3a40" stroke="#9a9a9a"/><path d="M1.5 6L3.5 6L4.3 2.5L5 6L7 3.5L8.5 5.5" stroke="#5cc8a8" stroke-width="1.1" fill="none"/><circle cx="4.6" cy="9.3" r="1.3" fill="#30c030"/></svg>
<div class="t m" style="left:145px;top:640px">System</div>
<div class="t m blue" style="left:197px;top:640px"> &quot;.data&quot;</div>
<div class="t m" style="left:428px;top:640px">Initialized data</div>
<div class="t m" style="left:632px;top:640px">IMG</div>
<div class="t m blue" style="left:676px;top:640px">-RW--</div>
<div class="t m" style="left:761px;top:640px">ERWC-</div>
<div class="t m" style="left:6px;top:651px">77E4B000</div>
<div class="t m" style="left:70px;top:651px">0001B000</div>
<svg class="a" style="left:131px;top:651px" width="10" height="11" viewBox="0 0 10 11"><rect x="0.5" y="0.5" width="9" height="7" rx="1" fill="#3a3a40" stroke="#9a9a9a"/><path d="M1.5 6L3.5 6L4.3 2.5L5 6L7 3.5L8.5 5.5" stroke="#5cc8a8" stroke-width="1.1" fill="none"/><circle cx="4.6" cy="9.3" r="1.3" fill="#30c030"/></svg>
<div class="t m" style="left:145px;top:651px">System</div>
<div class="t m blue" style="left:197px;top:651px"> &quot;.rsrc&quot;</div>
<div class="t m" style="left:428px;top:651px">Resources</div>
<div class="t m" style="left:632px;top:651px">IMG</div>
<div class="t m blue" style="left:676px;top:651px">-R---</div>
<div class="t m" style="left:761px;top:651px">ERWC-</div>
<div class="t m" style="left:6px;top:662px">77E66000</div>
<div class="t m" style="left:70px;top:662px">00005000</div>
<svg class="a" style="left:131px;top:662px" width="10" height="11" viewBox="0 0 10 11"><rect x="0.5" y="0.5" width="9" height="7" rx="1" fill="#3a3a40" stroke="#9a9a9a"/><path d="M1.5 6L3.5 6L4.3 2.5L5 6L7 3.5L8.5 5.5" stroke="#5cc8a8" stroke-width="1.1" fill="none"/><circle cx="4.6" cy="9.3" r="1.3" fill="#30c030"/></svg>
<div class="t m" style="left:145px;top:662px">System</div>
<div class="t m blue" style="left:197px;top:662px"> &quot;.reloc&quot;</div>
<div class="t m" style="left:428px;top:662px">Base relocations</div>
<div class="t m" style="left:632px;top:662px">IMG</div>
<div class="t m blue" style="left:676px;top:662px">-R---</div>
<div class="t m" style="left:761px;top:662px">ERWC-</div>
<div class="t m" style="left:6px;top:673px">77E70000</div>
<div class="t m" style="left:70px;top:673px">00001000</div>
<svg class="a" style="left:131px;top:673px" width="10" height="11" viewBox="0 0 10 11"><rect x="0.5" y="0.5" width="9" height="7" rx="1" fill="#3a3a40" stroke="#9a9a9a"/><path d="M1.5 6L3.5 6L4.3 2.5L5 6L7 3.5L8.5 5.5" stroke="#5cc8a8" stroke-width="1.1" fill="none"/><circle cx="4.6" cy="9.3" r="1.3" fill="#30c030"/></svg>
<div class="t m" style="left:145px;top:673px">System</div>
<div class="t m" style="left:197px;top:673px;width:227px;overflow:hidden">rpcrt4.dll</div>
<div class="t m" style="left:632px;top:673px">IMG</div>
<div class="t m blue" style="left:676px;top:673px">-R---</div>
<div class="t m" style="left:761px;top:673px">ERWC-</div>
<div class="t m" style="left:6px;top:684px">77E71000</div>
<div class="t m" style="left:70px;top:684px">00083000</div>
<svg class="a" style="left:131px;top:684px" width="10" height="11" viewBox="0 0 10 11"><rect x="0.5" y="0.5" width="9" height="7" rx="1" fill="#3a3a40" stroke="#9a9a9a"/><path d="M1.5 6L3.5 6L4.3 2.5L5 6L7 3.5L8.5 5.5" stroke="#5cc8a8" stroke-width="1.1" fill="none"/><circle cx="4.6" cy="9.3" r="1.3" fill="#30c030"/></svg>
<div class="t m" style="left:145px;top:684px">System</div>
<div class="t m blue" style="left:197px;top:684px"> &quot;.text&quot;</div>
<div class="t m" style="left:428px;top:684px">Executable code</div>
<div class="t m" style="left:632px;top:684px">IMG</div>
<div class="t m blue" style="left:676px;top:684px">ER---</div>
<div class="t m" style="left:761px;top:684px">ERWC-</div>
<div class="t m" style="left:6px;top:695px">77EF4000</div>
<div class="t m" style="left:70px;top:695px">00007000</div>
<svg class="a" style="left:131px;top:695px" width="10" height="11" viewBox="0 0 10 11"><rect x="0.5" y="0.5" width="9" height="7" rx="1" fill="#3a3a40" stroke="#9a9a9a"/><path d="M1.5 6L3.5 6L4.3 2.5L5 6L7 3.5L8.5 5.5" stroke="#5cc8a8" stroke-width="1.1" fill="none"/><circle cx="4.6" cy="9.3" r="1.3" fill="#30c030"/></svg>
<div class="t m" style="left:145px;top:695px">System</div>
<div class="t m blue" style="left:197px;top:695px"> &quot;.orpc&quot;</div>
<div class="t m" style="left:632px;top:695px">IMG</div>
<div class="t m blue" style="left:676px;top:695px">ER---</div>
<div class="t m" style="left:761px;top:695px">ERWC-</div>
<div class="t m" style="left:6px;top:706px">77EFB000</div>
<div class="t m" style="left:70px;top:706px">00001000</div>
<svg class="a" style="left:131px;top:706px" width="10" height="11" viewBox="0 0 10 11"><rect x="0.5" y="0.5" width="9" height="7" rx="1" fill="#3a3a40" stroke="#9a9a9a"/><path d="M1.5 6L3.5 6L4.3 2.5L5 6L7 3.5L8.5 5.5" stroke="#5cc8a8" stroke-width="1.1" fill="none"/><circle cx="4.6" cy="9.3" r="1.3" fill="#30c030"/></svg>
<div class="t m" style="left:145px;top:706px">System</div>
<div class="t m blue" style="left:197px;top:706px"> &quot;.data&quot;</div>
<div class="t m" style="left:428px;top:706px">Initialized data</div>
<div class="t m" style="left:632px;top:706px">IMG</div>
<div class="t m blue" style="left:676px;top:706px">-RW--</div>
<div class="t m" style="left:761px;top:706px">ERWC-</div>
<div class="t m" style="left:6px;top:717px">77EFC000</div>
<div class="t m" style="left:70px;top:717px">00001000</div>
<svg class="a" style="left:131px;top:717px" width="10" height="11" viewBox="0 0 10 11"><rect x="0.5" y="0.5" width="9" height="7" rx="1" fill="#3a3a40" stroke="#9a9a9a"/><path d="M1.5 6L3.5 6L4.3 2.5L5 6L7 3.5L8.5 5.5" stroke="#5cc8a8" stroke-width="1.1" fill="none"/><circle cx="4.6" cy="9.3" r="1.3" fill="#30c030"/></svg>
<div class="t m" style="left:145px;top:717px">System</div>
<div class="t m blue" style="left:197px;top:717px"> &quot;.rsrc&quot;</div>
<div class="t m" style="left:428px;top:717px">Resources</div>
<div class="t m" style="left:632px;top:717px">IMG</div>
<div class="t m blue" style="left:676px;top:717px">-R---</div>
<div class="t m" style="left:761px;top:717px">ERWC-</div>
<div class="t m" style="left:6px;top:728px">77EFD000</div>
<div class="t m" style="left:70px;top:728px">00005000</div>
<svg class="a" style="left:131px;top:728px" width="10" height="11" viewBox="0 0 10 11"><rect x="0.5" y="0.5" width="9" height="7" rx="1" fill="#3a3a40" stroke="#9a9a9a"/><path d="M1.5 6L3.5 6L4.3 2.5L5 6L7 3.5L8.5 5.5" stroke="#5cc8a8" stroke-width="1.1" fill="none"/><circle cx="4.6" cy="9.3" r="1.3" fill="#30c030"/></svg>
<div class="t m" style="left:145px;top:728px">System</div>
<div class="t m blue" style="left:197px;top:728px"> &quot;.reloc&quot;</div>
<div class="t m" style="left:428px;top:728px">Base relocations</div>
<div class="t m" style="left:632px;top:728px">IMG</div>
<div class="t m blue" style="left:676px;top:728px">-R---</div>
<div class="t m" style="left:761px;top:728px">ERWC-</div>
<div class="t m" style="left:6px;top:739px">77FE0000</div>
<div class="t m" style="left:70px;top:739px">00001000</div>
<svg class="a" style="left:131px;top:739px" width="10" height="11" viewBox="0 0 10 11"><rect x="0.5" y="0.5" width="9" height="7" rx="1" fill="#3a3a40" stroke="#9a9a9a"/><path d="M1.5 6L3.5 6L4.3 2.5L5 6L7 3.5L8.5 5.5" stroke="#5cc8a8" stroke-width="1.1" fill="none"/><circle cx="4.6" cy="9.3" r="1.3" fill="#30c030"/></svg>
<div class="t m" style="left:145px;top:739px">System</div>
<div class="t m" style="left:197px;top:739px;width:227px;overflow:hidden">secur32.dll</div>
<div class="t m" style="left:632px;top:739px">IMG</div>
<div class="t m blue" style="left:676px;top:739px">-R---</div>
<div class="t m" style="left:761px;top:739px">ERWC-</div>
<div class="t m" style="left:6px;top:750px">77FE1000</div>
<div class="t m" style="left:70px;top:750px">0000D000</div>
<svg class="a" style="left:131px;top:750px" width="10" height="11" viewBox="0 0 10 11"><rect x="0.5" y="0.5" width="9" height="7" rx="1" fill="#3a3a40" stroke="#9a9a9a"/><path d="M1.5 6L3.5 6L4.3 2.5L5 6L7 3.5L8.5 5.5" stroke="#5cc8a8" stroke-width="1.1" fill="none"/><circle cx="4.6" cy="9.3" r="1.3" fill="#30c030"/></svg>
<div class="t m" style="left:145px;top:750px">System</div>
<div class="t m blue" style="left:197px;top:750px"> &quot;.text&quot;</div>
<div class="t m" style="left:428px;top:750px">Executable code</div>
<div class="t m" style="left:632px;top:750px">IMG</div>
<div class="t m blue" style="left:676px;top:750px">ER---</div>
<div class="t m" style="left:761px;top:750px">ERWC-</div>
<div class="t m" style="left:6px;top:761px">77FEE000</div>
<div class="t m" style="left:70px;top:761px">00001000</div>
<svg class="a" style="left:131px;top:761px" width="10" height="11" viewBox="0 0 10 11"><rect x="0.5" y="0.5" width="9" height="7" rx="1" fill="#3a3a40" stroke="#9a9a9a"/><path d="M1.5 6L3.5 6L4.3 2.5L5 6L7 3.5L8.5 5.5" stroke="#5cc8a8" stroke-width="1.1" fill="none"/><circle cx="4.6" cy="9.3" r="1.3" fill="#30c030"/></svg>
<div class="t m" style="left:145px;top:761px">System</div>
<div class="t m blue" style="left:197px;top:761px"> &quot;.data&quot;</div>
<div class="t m" style="left:428px;top:761px">Initialized data</div>
<div class="t m" style="left:632px;top:761px">IMG</div>
<div class="t m blue" style="left:676px;top:761px">-RW--</div>
<div class="t m" style="left:761px;top:761px">ERWC-</div>
<div class="t m" style="left:6px;top:772px">77FEF000</div>
<div class="t m" style="left:70px;top:772px">00001000</div>
<svg class="a" style="left:131px;top:772px" width="10" height="11" viewBox="0 0 10 11"><rect x="0.5" y="0.5" width="9" height="7" rx="1" fill="#3a3a40" stroke="#9a9a9a"/><path d="M1.5 6L3.5 6L4.3 2.5L5 6L7 3.5L8.5 5.5" stroke="#5cc8a8" stroke-width="1.1" fill="none"/><circle cx="4.6" cy="9.3" r="1.3" fill="#30c030"/></svg>
<div class="t m" style="left:145px;top:772px">System</div>
<div class="t m blue" style="left:197px;top:772px"> &quot;.rsrc&quot;</div>
<div class="t m" style="left:428px;top:772px">Resources</div>
<div class="t m" style="left:632px;top:772px">IMG</div>
<div class="t m blue" style="left:676px;top:772px">-R---</div>
<div class="t m" style="left:761px;top:772px">ERWC-</div>
<div class="t m" style="left:6px;top:783px">77FF0000</div>
<div class="t m" style="left:70px;top:783px">00001000</div>
<svg class="a" style="left:131px;top:783px" width="10" height="11" viewBox="0 0 10 11"><rect x="0.5" y="0.5" width="9" height="7" rx="1" fill="#3a3a40" stroke="#9a9a9a"/><path d="M1.5 6L3.5 6L4.3 2.5L5 6L7 3.5L8.5 5.5" stroke="#5cc8a8" stroke-width="1.1" fill="none"/><circle cx="4.6" cy="9.3" r="1.3" fill="#30c030"/></svg>
<div class="t m" style="left:145px;top:783px">System</div>
<div class="t m blue" style="left:197px;top:783px"> &quot;.reloc&quot;</div>
<div class="t m" style="left:428px;top:783px">Base relocations</div>
<div class="t m" style="left:632px;top:783px">IMG</div>
<div class="t m blue" style="left:676px;top:783px">-R---</div>
<div class="t m" style="left:761px;top:783px">ERWC-</div>
<div class="t m" style="left:6px;top:794px">7C800000</div>
<div class="t m" style="left:70px;top:794px">00001000</div>
<svg class="a" style="left:131px;top:794px" width="10" height="11" viewBox="0 0 10 11"><rect x="0.5" y="0.5" width="9" height="7" rx="1" fill="#3a3a40" stroke="#9a9a9a"/><path d="M1.5 6L3.5 6L4.3 2.5L5 6L7 3.5L8.5 5.5" stroke="#5cc8a8" stroke-width="1.1" fill="none"/><circle cx="4.6" cy="9.3" r="1.3" fill="#30c030"/></svg>
<div class="t m" style="left:145px;top:794px">System</div>
<div class="t m" style="left:197px;top:794px;width:227px;overflow:hidden">kernel32.dll</div>
<div class="t m" style="left:632px;top:794px">IMG</div>
<div class="t m blue" style="left:676px;top:794px">-R---</div>
<div class="t m" style="left:761px;top:794px">ERWC-</div>
<div class="t m" style="left:6px;top:805px">7C801000</div>
<div class="t m" style="left:70px;top:805px">00084000</div>
<svg class="a" style="left:131px;top:805px" width="10" height="11" viewBox="0 0 10 11"><rect x="0.5" y="0.5" width="9" height="7" rx="1" fill="#3a3a40" stroke="#9a9a9a"/><path d="M1.5 6L3.5 6L4.3 2.5L5 6L7 3.5L8.5 5.5" stroke="#5cc8a8" stroke-width="1.1" fill="none"/><circle cx="4.6" cy="9.3" r="1.3" fill="#30c030"/></svg>
<div class="t m" style="left:145px;top:805px">System</div>
<div class="t m blue" style="left:197px;top:805px"> &quot;.text&quot;</div>
<div class="t m" style="left:428px;top:805px">Executable code</div>
<div class="t m" style="left:632px;top:805px">IMG</div>
<div class="t m blue" style="left:676px;top:805px">ER---</div>
<div class="t m" style="left:761px;top:805px">ERWC-</div>
<div class="t m" style="left:6px;top:816px">7C885000</div>
<div class="t m" style="left:70px;top:816px">00005000</div>
<svg class="a" style="left:131px;top:816px" width="10" height="11" viewBox="0 0 10 11"><rect x="0.5" y="0.5" width="9" height="7" rx="1" fill="#3a3a40" stroke="#9a9a9a"/><path d="M1.5 6L3.5 6L4.3 2.5L5 6L7 3.5L8.5 5.5" stroke="#5cc8a8" stroke-width="1.1" fill="none"/><circle cx="4.6" cy="9.3" r="1.3" fill="#30c030"/></svg>
<div class="t m" style="left:145px;top:816px">System</div>
<div class="t m blue" style="left:197px;top:816px"> &quot;.data&quot;</div>
<div class="t m" style="left:428px;top:816px">Initialized data</div>
<div class="t m" style="left:632px;top:816px">IMG</div>
<div class="t m blue" style="left:676px;top:816px">-RW--</div>
<div class="t m" style="left:761px;top:816px">ERWC-</div>
<div class="t m" style="left:6px;top:827px">7C88A000</div>
<div class="t m" style="left:70px;top:827px">00066000</div>
<svg class="a" style="left:131px;top:827px" width="10" height="11" viewBox="0 0 10 11"><rect x="0.5" y="0.5" width="9" height="7" rx="1" fill="#3a3a40" stroke="#9a9a9a"/><path d="M1.5 6L3.5 6L4.3 2.5L5 6L7 3.5L8.5 5.5" stroke="#5cc8a8" stroke-width="1.1" fill="none"/><circle cx="4.6" cy="9.3" r="1.3" fill="#30c030"/></svg>
<div class="t m" style="left:145px;top:827px">System</div>
<div class="t m blue" style="left:197px;top:827px"> &quot;.rsrc&quot;</div>
<div class="t m" style="left:428px;top:827px">Resources</div>
<div class="t m" style="left:632px;top:827px">IMG</div>
<div class="t m blue" style="left:676px;top:827px">-R---</div>
<div class="t m" style="left:761px;top:827px">ERWC-</div>
<div class="t m" style="left:6px;top:838px">7C8F0000</div>
<div class="t m" style="left:70px;top:838px">00006000</div>
<svg class="a" style="left:131px;top:838px" width="10" height="11" viewBox="0 0 10 11"><rect x="0.5" y="0.5" width="9" height="7" rx="1" fill="#3a3a40" stroke="#9a9a9a"/><path d="M1.5 6L3.5 6L4.3 2.5L5 6L7 3.5L8.5 5.5" stroke="#5cc8a8" stroke-width="1.1" fill="none"/><circle cx="4.6" cy="9.3" r="1.3" fill="#30c030"/></svg>
<div class="t m" style="left:145px;top:838px">System</div>
<div class="t m blue" style="left:197px;top:838px"> &quot;.reloc&quot;</div>
<div class="t m" style="left:428px;top:838px">Base relocations</div>
<div class="t m" style="left:632px;top:838px">IMG</div>
<div class="t m blue" style="left:676px;top:838px">-R---</div>
<div class="t m" style="left:761px;top:838px">ERWC-</div>
</div>
<div class="a" style="left:8px;top:176px;width:807px;height:14px;border:1px solid #ff0000;border-radius:3px;box-shadow:0 0 0 1px rgba(12,30,30,0.55),inset 0 0 0 1px rgba(12,30,30,0.55)"></div>
<div class="a" style="left:-5px;top:329px;width:815px;height:13px;border:1px solid #ff0000;border-radius:3px;box-shadow:0 0 0 1px rgba(12,30,30,0.55),inset 0 0 0 1px rgba(12,30,30,0.55)"></div>
<div class="a" style="left:-5px;top:453px;width:832px;height:14px;border:1px solid #ff0000;border-radius:3px;box-shadow:0 0 0 1px rgba(12,30,30,0.55),inset 0 0 0 1px rgba(12,30,30,0.55)"></div>
<div class="a" style="left:1698.5px;top:112px;width:0;height:0;border-left:4.5px solid transparent;border-right:4.5px solid transparent;border-bottom:8px solid #8a8a8a"></div>
<div class="a" style="left:1698px;top:124px;width:10px;height:709px;background:#404040;border-radius:5px"></div>
<div class="a" style="left:1698px;top:134px;width:10px;height:687px;background:#777;border-radius:5px"></div>
<div class="a" style="left:1698.5px;top:837px;width:0;height:0;border-left:4.5px solid transparent;border-right:4.5px solid transparent;border-top:8px solid #8a8a8a"></div>
<div class="t" style="left:1px;top:861px;letter-spacing:-0.5px">Command:</div>
<div class="a" style="left:56px;top:857px;width:1552px;height:18px;background:#2f2f2f;border-radius:3px"></div>
<div class="t" style="left:59px;top:862px;color:#808080;font-family:Liberation Mono;font-size:11.667px">Commands are comma separated (like assembly instructions): mov eax, ebx</div>
<div class="t" style="left:1614px;top:861px">Default</div>
<div class="a" style="left:1701px;top:864px;width:0;height:0;border-left:4px solid transparent;border-right:4px solid transparent;border-top:5px solid #9a9a9a"></div>
<div class="t" style="left:15px;top:887px;color:#b4a848">Paused</div>
<div class="t" style="left:71px;top:887px">INT3 breakpoint at lab09-03.<span style="color:#7f9cff;text-decoration:underline;text-underline-offset:1px">00401047</span>!</div>
<div class="t" style="left:1537px;top:888px">Time Wasted Debugging: 0:00:05:04</div>
<div class="a" style="left:0;top:904px;width:1714px;height:30px;background:linear-gradient(#3168d5 0px,#3168d5 1px,#4a90e8 1px,#4a90e8 3px,#2a5ed8 4px,#2458d8 8px,#245edc 24px,#2152c8 28px,#1a44a8 30px)"></div><div class="a" style="left:0;top:904px;width:97px;height:30px;border-radius:0 14px 14px 0;background:linear-gradient(#2f7a3a 0px,#5aaa5a 2px,#78c078 3px,#4aa44a 7px,#3a9c3a 14px,#3fa83f 24px,#348a34 30px);box-shadow:inset -2px 0 2px #1e6a1e"></div><svg class="a" style="left:10px;top:909px;" width="19" height="18" viewBox="0 0 19 18"><g stroke="#1a4a1a" stroke-width="0.4" stroke-opacity="0.5"><path d="M2.5 1.5Q5.5 -0.5 9.3 1.8L8.2 8Q4.8 6 1.3 8Z" fill="#f0602a"/><path d="M10.3 2.2Q13.5 4.2 18.5 1.8L17.3 8.2Q13 10.3 9.2 8.4Z" fill="#6cc83c"/><path d="M1.1 9Q4.6 7 8 9.2L6.9 15.5Q3.5 13.5 0 15.5Z" fill="#4a9af0"/><path d="M9 9.5Q12.6 11.6 17.1 9.2L16 15.6Q11.5 18 7.9 15.8Z" fill="#fcd030"/></g></svg><div class="t" style="left:34px;top:909px;font-size:17px;line-height:20px;font-weight:bold;font-style:italic;color:#fff;text-shadow:1px 1px 1px #1a4a1a">start</div><div class="a" style="left:107px;top:907px;width:158px;height:25px;background:#3c80f0;border-radius:3px;border:1px solid #2a5fcf"></div><svg class="a" style="left:115px;top:912px;" width="17" height="15" viewBox="0 0 17 15"><path d="M0.5 2H6L7 1H13V4H1Z" fill="#e8c060" stroke="#a07010" stroke-width="0.6"/><path d="M0.5 4H15L16.5 5L15 14H1Z" fill="#f8d870" stroke="#a07010" stroke-width="0.6"/></svg><div class="t" style="left:136px;top:913px;color:#fff">C:\Documents and Se...</div><div class="a" style="left:267px;top:907px;width:159px;height:25px;background:#1e50b8;border-radius:3px;border:1px solid #173f98;box-shadow:inset 1px 1px 2px #0c2a70"></div><svg class="a" style="left:275px;top:911px;" width="20" height="18" viewBox="0 0 20 18"><g fill="#3a3a3a"><path d="M7 7.3Q7 2.2 10 2.2Q13 2.2 13 7.3Z"/><path d="M5 8.3H15L14.6 12.8Q14 15.8 10 15.8Q6 15.8 5.4 12.8Z"/></g><path d="M3.6 4.3Q4 7.8 6.2 9M16.4 4.3Q16 7.8 13.8 9M2.3 10.5H17.7M6 12.3Q3.8 13 3.4 16.2M14 12.3Q16.2 13 16.6 16.2" stroke="#3a3a3a" stroke-width="1.3" fill="none"/><rect x="9.2" y="10" width="1.6" height="5.6" fill="#1e50b8"/></svg><div class="t" style="left:296px;top:913px;color:#fff">Lab09-03.exe - PID: ...</div><div class="a" style="left:428px;top:907px;width:158px;height:25px;background:#3c80f0;border-radius:3px;border:1px solid #2a5fcf"></div><svg class="a" style="left:436px;top:913px;" width="16" height="13" viewBox="0 0 16 13"><rect x="0.5" y="0.5" width="15" height="12" fill="#000" stroke="#8090a8"/><rect x="0.5" y="0.5" width="15" height="2" fill="#6a80b0"/><text x="1.5" y="10" font-family="Liberation Mono" font-weight="bold" font-size="6.5" fill="#fff">C:\</text></svg><div class="t" style="left:455px;top:913px;color:#fff">C:\Documents and Se...</div><div class="a" style="left:1603px;top:904px;width:111px;height:30px;background:linear-gradient(#1ea8f0 0px,#12a0ec 3px,#0f92e4 26px,#0a78cc 30px);border-left:1px solid #0a4ab0"></div><svg class="a" style="left:1594px;top:910px;" width="19" height="19" viewBox="0 0 19 19"><circle cx="9.5" cy="9.5" r="8.8" fill="#2a88e8" stroke="#a8c8f0" stroke-width="0.8"/><path d="M11 5L7 9.5L11 14" fill="none" stroke="#fff" stroke-width="2.2"/></svg><svg class="a" style="left:1615px;top:911px;" width="13" height="16" viewBox="0 0 13 16"><path d="M6.5 0.5L12.5 2.5V8Q12 13 6.5 15.5Q1 13 0.5 8V2.5Z" fill="#f0d000" stroke="#806000" stroke-width="0.8"/><rect x="6" y="4" width="1.4" height="5" fill="#222"/><rect x="6" y="10.5" width="1.4" height="1.4" fill="#222"/></svg><svg class="a" style="left:1633px;top:911px;" width="13" height="16" viewBox="0 0 13 16"><path d="M6.5 0.5L12.5 2.5V8Q12 13 6.5 15.5Q1 13 0.5 8V2.5Z" fill="#d01818" stroke="#601010" stroke-width="0.8"/><path d="M4 5L9 10M9 5L4 10" stroke="#fff" stroke-width="1.6"/></svg><div class="t" style="left:1657px;top:913px;color:#fff">6:34 PM</div>
</body></html>
